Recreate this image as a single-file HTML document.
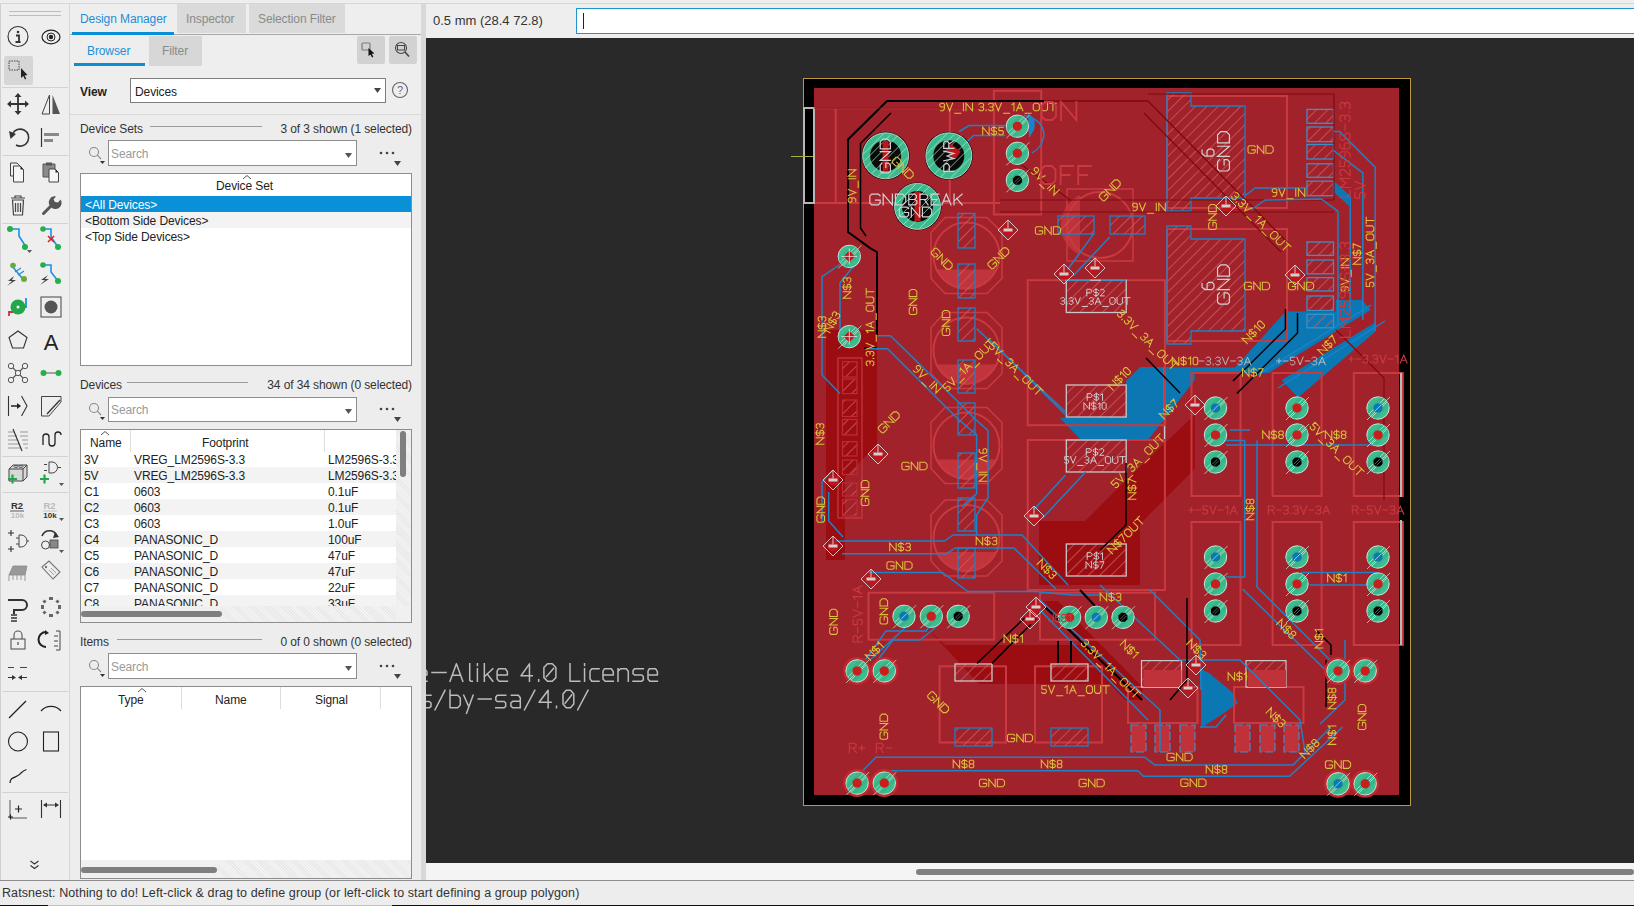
<!DOCTYPE html>
<html><head><meta charset="utf-8">
<style>
*{margin:0;padding:0;box-sizing:border-box}
html,body{width:1634px;height:906px;overflow:hidden;background:#eeeeee;font-family:"Liberation Sans",sans-serif;font-size:12px;color:#333}
.a{position:absolute}
.sep{position:absolute;height:1px;background:#cfcfcf}
.t{position:absolute;white-space:nowrap;line-height:16px}
.box{position:absolute;background:#fff;border:1px solid #8a8a8a}
.row{position:absolute;left:1px;right:1px;height:16px}
.row span{position:absolute;top:1px;white-space:nowrap}
.hdr{position:absolute;top:0;height:22px;border-right:1px solid #dcdcdc}
</style></head><body>
<!-- top strip -->
<div class="a" style="left:0;top:0;width:1634px;height:3px;background:#eeeeee"></div>
<div class="a" style="left:0;top:3px;width:1634px;height:1px;background:#d6d6d6"></div>
<!-- left toolbar -->
<div class="a" style="left:0;top:4px;width:1px;height:876px;background:#d0d0d0"></div>
<div class="a" style="left:69px;top:4px;width:1px;height:876px;background:#d6d6d6"></div>
<svg class="a" style="left:0;top:0" width="70" height="880" font-family="Liberation Sans">
 <!-- grip -->
 <path d="M9 11.5 H61 M9 15.5 H61" stroke="#bdbdbd" stroke-width="1"/>
 <!-- separators -->
 <g stroke="#d2d2d2" stroke-width="1"><path d="M2 87.5H68M2 155.5H68M2 223.5H68M2 456.5H68M2 492.5H68M2 691.5H68M2 792.5H68"/></g>
 <!-- row1 info / eye -->
 <circle cx="18" cy="36.5" r="10" fill="none" stroke="#333" stroke-width="1.1"/>
 <circle cx="18" cy="32" r="1.3" fill="#333"/><path d="M16 35.5H19V41.5M15.5 42H20.5" stroke="#333" stroke-width="1.8" fill="none"/>
 <ellipse cx="51" cy="37" rx="9" ry="6.8" fill="none" stroke="#222" stroke-width="1.2"/>
 <circle cx="51" cy="37" r="4" fill="none" stroke="#222" stroke-width="1"/><circle cx="51" cy="37" r="2.2" fill="#222"/>
 <!-- row2 select -->
 <rect x="4" y="56" width="29" height="29" rx="2" fill="#d6d6d6"/>
 <rect x="9" y="61" width="10" height="9" fill="none" stroke="#444" stroke-width="1" stroke-dasharray="1.5 1"/>
 <path d="M21 68 L21 78 L23.3 76 L25 79.5 L26.3 78.8 L24.6 75.4 L27.5 75 Z" fill="#222"/>
 <!-- row3 move / mirror -->
 <path d="M18 95V113M9 104H27" stroke="#333" stroke-width="1.8"/>
 <path d="M18 93l-3.5 4h7zM18 115l-3.5-4h7zM7 104l4-3.5v7zM29 104l-4-3.5v7z" fill="#333"/>
 <path d="M49.5 95 L42 114 H49.5 Z" fill="none" stroke="#444" stroke-width="1"/>
 <path d="M52.5 95 L60 114 H52.5 Z" fill="#555"/>
 <!-- row4 rotate / align -->
 <path d="M12.5 134 A8.5 8.5 0 1 1 16 145" fill="none" stroke="#333" stroke-width="1.6"/>
 <path d="M9 131 L16 134 L10.5 139 Z" fill="#333"/>
 <path d="M41.5 128V147" stroke="#333" stroke-width="1.2"/>
 <rect x="44" y="133" width="15" height="3" fill="#888"/><rect x="44" y="139" width="9" height="3" fill="#888"/>
 <!-- row5 copy / paste -->
 <path d="M10.5 163H17l3 3v10h-9.5z" fill="#f0f0f0" stroke="#444" stroke-width="1"/>
 <path d="M13.5 166H20l3.5 3.5V182h-10z" fill="#f6f6f6" stroke="#444" stroke-width="1"/>
 <path d="M20.5 166L23.5 169.5H20.5z" fill="#222"/>
 <path d="M43 164H55V177H43z" fill="#8a8a8a" stroke="#555" stroke-width="1"/>
 <rect x="46" y="162.5" width="6" height="3" fill="#555"/>
 <path d="M49 169H55l3.5 3.5V182H49z" fill="#f6f6f6" stroke="#444" stroke-width="1"/>
 <path d="M55.5 169L58.5 172.5H55.5z" fill="#222"/>
 <!-- row6 trash / wrench -->
 <path d="M11 198H25M15 198V196H21V198" fill="none" stroke="#444" stroke-width="1.2"/>
 <path d="M12.5 200H23.5L22.5 215H13.5Z" fill="none" stroke="#444" stroke-width="1.2"/>
 <path d="M15.5 203V212M18 203V212M20.5 203V212" stroke="#444" stroke-width="1.2"/>
 <path d="M43.5 213.5 L52 205" stroke="#555" stroke-width="3" stroke-linecap="round"/>
 <path d="M50.5 206.5 A6 6 0 0 1 56 196.5 L53.5 199.5 L55 202 L58 202.5 L60.5 199.5 A6 6 0 0 1 50.5 206.5Z" fill="#555"/>
 <!-- row7 route / ripup -->
 <path d="M10 229H19V236L26 247" fill="none" stroke="#1f8fe0" stroke-width="1.6"/>
 <circle cx="10" cy="229" r="3" fill="#22b04a"/><circle cx="25" cy="247" r="3" fill="#22b04a"/>
 <path d="M27 250h5l-2.5 3z" fill="#555"/>
 <path d="M43 229H51V237L58 247" fill="none" stroke="#1f8fe0" stroke-width="1.6"/>
 <circle cx="43" cy="229" r="2.8" fill="#22b04a"/><circle cx="58" cy="247" r="3" fill="#22b04a"/>
 <path d="M48 236L54 242M54 236L48 242" stroke="#e02020" stroke-width="1.6"/>
 <!-- row8 -->
 <path d="M12 266L22 278" stroke="#1f8fe0" stroke-width="1.5"/>
 <circle cx="13" cy="265.5" r="2.8" fill="#6aa83a"/><circle cx="24" cy="279" r="3" fill="#6aa83a"/>
 <path d="M15 272L21 268M18 275L24 271" stroke="#1f8fe0" stroke-width="1.2"/>
 <path d="M14 276L8 281H12L7 286L16 280H12Z" fill="#444"/>
 <path d="M43 265H51V272L58 281" fill="none" stroke="#1f8fe0" stroke-width="1.6"/>
 <circle cx="43" cy="265" r="2.8" fill="#22b04a"/><circle cx="58" cy="281" r="3" fill="#22b04a"/>
 <path d="M48 275L41 280H45L40 285L49 279H45Z" fill="#444"/>
 <!-- row9 via / hole -->
 <path d="M9 316V312H13" fill="none" stroke="#d03040" stroke-width="1.8"/>
 <path d="M26 298V307H23" fill="none" stroke="#1f8fe0" stroke-width="1.8"/>
 <circle cx="18" cy="307" r="7.5" fill="#21a84a"/><circle cx="18" cy="307" r="1.5" fill="#fff"/>
 <rect x="41" y="297" width="20" height="20" fill="none" stroke="#444" stroke-width="1"/>
 <circle cx="51" cy="307" r="6.5" fill="#555"/>
 <!-- row10 polygon / text -->
 <path d="M18 331L27 337.5L23.5 348H12.5L9 337.5Z" fill="none" stroke="#333" stroke-width="1.1"/>
 <text x="51" y="349.5" font-size="22" text-anchor="middle" fill="#222">A</text>
 <!-- row11 -->
 <path d="M11 366L25 380M25 366L11 380" stroke="#555" stroke-width="1.1"/>
 <circle cx="18" cy="373" r="2.7" fill="#f0f0f0" stroke="#555"/>
 <circle cx="11" cy="366" r="2.7" fill="#f0f0f0" stroke="#555"/><circle cx="25" cy="366" r="2.7" fill="#f0f0f0" stroke="#555"/>
 <circle cx="11" cy="380" r="2.7" fill="#f0f0f0" stroke="#555"/><circle cx="25" cy="380" r="2.7" fill="#f0f0f0" stroke="#555"/>
 <path d="M44 373H58" stroke="#888" stroke-width="1.5"/>
 <circle cx="43.5" cy="373" r="3" fill="#22b04a"/><circle cx="58.5" cy="373" r="3" fill="#22b04a"/>
 <!-- row12 -->
 <path d="M8.5 396V416" stroke="#333" stroke-width="1.1"/>
 <path d="M11 406H20" stroke="#222" stroke-width="1.5"/><path d="M21 406L17 403V409Z" fill="#222"/>
 <path d="M21.5 396L27 406L21.5 416" fill="none" stroke="#333" stroke-width="1.1"/>
 <path d="M41.5 396.5H61V402L49 416H41.5Z" fill="none" stroke="#444" stroke-width="1"/>
 <path d="M47 414L60 400" stroke="#333" stroke-width="1.3"/>
 <!-- row13 -->
 <path d="M8 432H15M8 436H17M8 440H18M8 444H20M8 448H21M20 432H28M20 436H28M22 440H28M23 444H28M25 448H28" stroke="#999" stroke-width="1"/>
 <path d="M13 429L22 451" stroke="#333" stroke-width="1.2"/>
 <path d="M43 445V437A3 3 0 0 1 49 437V443A3 3 0 0 0 55 443V435A3 3 0 0 1 61 435" fill="none" stroke="#222" stroke-width="1.3"/>
 <!-- row14 add -->
 <path d="M9 469L13 465H27V477L23 481H9Z" fill="#d8d8d8" stroke="#444" stroke-width="1"/>
 <path d="M9 469H23V481M23 469L27 465" fill="none" stroke="#444" stroke-width="1"/>
 <ellipse cx="16" cy="466.5" rx="2" ry="1" fill="none" stroke="#444" stroke-width="0.8"/><ellipse cx="21" cy="466.5" rx="2" ry="1" fill="none" stroke="#444" stroke-width="0.8"/>
 <path d="M8 479H17M12.5 474.5V483.5" stroke="#21a84a" stroke-width="2.2"/>
 <path d="M52 462A5.5 5.5 0 0 1 52 473H49V462Z" fill="none" stroke="#444" stroke-width="1"/>
 <path d="M58 467.5H61M47 464.5H44M47 470.5H44" stroke="#444" stroke-width="1"/>
 <path d="M40 479H49M44.5 474.5V483.5" stroke="#21a84a" stroke-width="2.2"/>
 <path d="M59 483h5l-2.5 3z" fill="#555"/>
 <!-- row15 R2 -->
 <text x="17" y="509" font-size="9.5" font-weight="bold" text-anchor="middle" fill="#333">R2</text>
 <path d="M10 511H24" stroke="#333" stroke-width="0.8"/>
 <text x="17.5" y="518" font-size="8" font-weight="bold" text-anchor="middle" fill="#bbb">10k</text>
 <text x="49.5" y="509" font-size="9.5" font-weight="bold" text-anchor="middle" fill="#bbb">R2</text>
 <path d="M43 511H57" stroke="#bbb" stroke-width="0.8"/>
 <text x="50" y="518" font-size="8" font-weight="bold" text-anchor="middle" fill="#333">10k</text>
 <path d="M59 518h5l-2.5 3z" fill="#555"/>
 <!-- row16 -->
 <path d="M8 533H14M11 530V536M8 549H14M11 546V552" stroke="#333" stroke-width="1.1"/>
 <path d="M19 535H21A6 6 0 0 1 21 547H19Z" fill="none" stroke="#444" stroke-width="1"/>
 <path d="M27 541H29M16 538H19M16 544H19" stroke="#444" stroke-width="1"/>
 <path d="M42 536A8 8 0 0 1 57 536" fill="none" stroke="#333" stroke-width="1.6"/>
 <path d="M55 532L59 537L53 538Z" fill="#333"/>
 <circle cx="45.5" cy="545" r="4" fill="none" stroke="#444" stroke-width="1"/>
 <rect x="50" y="540" width="8" height="8" fill="#888" stroke="#444" stroke-width="0.8"/>
 <path d="M59 550h5l-2.5 3z" fill="#555"/>
 <!-- row17 -->
 <path d="M9 575L13 566H27L25 575Z" fill="#999" stroke="#888" stroke-width="0.8"/>
 <path d="M9 575V581M13 575V580M17 575V580M21 575V580M25 575V581" stroke="#999" stroke-width="1"/>
 <path d="M42 567L49 561L60 572L53 579Z" fill="none" stroke="#777" stroke-width="1.1"/>
 <circle cx="46" cy="567" r="1.2" fill="#777"/><path d="M49 570L54 575M51 568L56 573" stroke="#888" stroke-width="0.8"/>
 <!-- row18 -->
 <path d="M8 600H22A5 5 0 0 1 22 610H14V614" fill="none" stroke="#333" stroke-width="2"/>
 <path d="M11 615H17M11 618H17M11 621H17" stroke="#333" stroke-width="1.5"/>
 <g fill="#666"><rect x="49" y="597" width="4" height="3"/><rect x="49" y="614" width="4" height="3"/><rect x="41" y="605" width="3" height="4"/><rect x="58" y="605" width="3" height="4"/>
 <rect x="43" y="600" width="3" height="3" transform="rotate(45 44.5 601.5)"/><rect x="56" y="600" width="3" height="3" transform="rotate(45 57.5 601.5)"/>
 <rect x="43" y="611" width="3" height="3" transform="rotate(45 44.5 612.5)"/><rect x="56" y="611" width="3" height="3" transform="rotate(45 57.5 612.5)"/></g>
 <!-- row19 lock -->
 <path d="M14 639V635A4 4 0 0 1 22 635V639" fill="none" stroke="#555" stroke-width="1.1"/>
 <rect x="11" y="639" width="14" height="10" fill="none" stroke="#555" stroke-width="1.1"/>
 <path d="M18 642V645" stroke="#555" stroke-width="1.3"/>
 <path d="M46 632A6 6 0 0 0 46 647" fill="none" stroke="#222" stroke-width="2"/>
 <path d="M45 630L49 633L45 635Z" fill="#222"/>
 <path d="M56 631H60V650H56M54 636H58M54 641H58M54 646H58" fill="none" stroke="#444" stroke-width="1"/>
 <!-- row20 -->
 <path d="M8 667.5H14M20 667.5H27" stroke="#444" stroke-width="1.1"/>
 <path d="M8 677.5H14M20 677.5H27" stroke="#333" stroke-width="1.2"/>
 <path d="M16 677.5L12 675V680ZM18 677.5L22 675V680Z" fill="#333"/>
 <!-- row21 line / arc -->
 <path d="M9 718L26 701" stroke="#222" stroke-width="1.2"/>
 <path d="M41 711A13 13 0 0 1 61 711" fill="none" stroke="#222" stroke-width="1.2"/>
 <!-- row22 circle / rect -->
 <circle cx="18" cy="741.5" r="9.5" fill="none" stroke="#222" stroke-width="1.1"/>
 <rect x="43.5" y="732" width="15" height="19" fill="none" stroke="#222" stroke-width="1.1"/>
 <!-- row23 spline -->
 <path d="M10 783C10 776 18 778 21 773C23 771 25 770 26.5 769.5" fill="none" stroke="#222" stroke-width="1.3"/>
 <!-- row24 -->
 <path d="M10 800V818H27" stroke="#444" stroke-width="0.9" fill="none"/>
 <path d="M8 817H13M10.5 814.5V819.5M15 809H22M18.5 805.5V812.5" stroke="#222" stroke-width="1.2"/>
 <path d="M41.5 800V818M60.5 800V818M44 805H58" stroke="#333" stroke-width="1.1"/>
 <path d="M43 805L47 802.5V807.5ZM59 805L55 802.5V807.5Z" fill="#333"/>
 <!-- chevron -->
 <path d="M30.5 861L34.5 864L38.5 861M30.5 865.5L34.5 868.5L38.5 865.5" fill="none" stroke="#333" stroke-width="1.1"/>
</svg>

<!-- panel -->
<!-- PANEL -->
<div class="a" style="left:177px;top:4px;width:69px;height:29px;background:#dadada"></div>
<div class="a" style="left:249px;top:4px;width:96px;height:29px;background:#dadada"></div>
<div class="t" style="left:80px;top:11px;font-size:12px;letter-spacing:-0.1px;color:#1c8fd8">Design Manager</div>
<div class="t" style="left:186px;top:11px;font-size:12px;letter-spacing:-0.1px;color:#8a8a8a">Inspector</div>
<div class="t" style="left:258px;top:11px;font-size:12px;letter-spacing:-0.1px;color:#8a8a8a">Selection Filter</div>
<div class="a" style="left:70px;top:34px;width:352px;height:1px;background:#a8a8a8"></div>
<div class="a" style="left:72px;top:32px;width:102px;height:3px;background:#0a8fd6"></div>
<!-- sub tabs -->
<div class="a" style="left:149px;top:36px;width:53px;height:30px;background:#d7d7d7"></div>
<div class="t" style="left:87px;top:43px;font-size:12px;letter-spacing:-0.1px;color:#1c8fd8">Browser</div>
<div class="t" style="left:162px;top:43px;font-size:12px;letter-spacing:-0.1px;color:#8a8a8a">Filter</div>
<div class="a" style="left:74px;top:63px;width:71px;height:3px;background:#0a8fd6"></div>
<div class="a" style="left:357px;top:36px;width:28px;height:28px;background:#d2d2d2;border-radius:2px"></div>
<div class="a" style="left:389px;top:36px;width:28px;height:28px;background:#d2d2d2;border-radius:2px"></div>
<svg class="a" style="left:357px;top:36px" width="60" height="28">
 <rect x="5" y="7" width="8" height="7" rx="1" fill="none" stroke="#7a7a7a" stroke-width="1.2"/>
 <path d="M11.5 12 L11.5 20 L13.5 18.5 L15 21.5 L16.3 20.8 L14.8 17.8 L17.5 17.5 Z" fill="#111"/>
 <circle cx="44" cy="12" r="5.5" fill="none" stroke="#444" stroke-width="1.1"/>
 <rect x="40.5" y="9.5" width="7" height="4.5" fill="none" stroke="#444" stroke-width="1"/>
 <path d="M48 16 L52 20.5" stroke="#444" stroke-width="1.6"/>
</svg>
<!-- view row -->
<div class="t" style="left:80px;top:84px;font-size:12px;letter-spacing:-0.1px;font-weight:bold;color:#222">View</div>
<div class="box" style="left:130px;top:78px;width:256px;height:25px;border-color:#7d7d7d"></div>
<div class="t" style="left:135px;top:84px;font-size:12px;letter-spacing:-0.1px;color:#222">Devices</div>
<svg class="a" style="left:372px;top:86px" width="40" height="12"><path d="M2 2 L9 2 L5.5 7 Z" fill="#444"/></svg>
<svg class="a" style="left:390px;top:80px" width="20" height="20"><circle cx="10" cy="10" r="7.5" fill="none" stroke="#666" stroke-width="1.1"/><text x="10" y="14.2" font-size="11" text-anchor="middle" fill="#666" font-family="Liberation Sans">?</text></svg>
<div class="a" style="left:70px;top:114px;width:352px;height:1px;background:#d8d8d8"></div>
<div class="a" style="left:70px;top:115px;width:352px;height:765px;background:#ededed"></div>

<!-- SECTION helper: Device Sets -->
<div class="t" style="left:80px;top:121px;font-size:12px;letter-spacing:-0.1px;color:#333">Device Sets</div>
<div class="a" style="left:150px;top:126px;width:112px;height:1px;background:#9a9a9a"></div>
<div class="t" style="right:1222px;top:121px;font-size:12px;letter-spacing:-0.1px;color:#333">3 of 3 shown (1 selected)</div>
<div class="box" style="left:108px;top:140px;width:249px;height:26px;border-color:#8d8d8d"></div>
<div class="t" style="left:111px;top:146px;font-size:12px;letter-spacing:-0.1px;color:#9a9a9a">Search</div>

<div class="t" style="left:80px;top:377px;font-size:12px;letter-spacing:-0.1px;color:#333">Devices</div>
<div class="a" style="left:127px;top:382px;width:121px;height:1px;background:#9a9a9a"></div>
<div class="t" style="right:1222px;top:377px;font-size:12px;letter-spacing:-0.1px;color:#333">34 of 34 shown (0 selected)</div>
<div class="box" style="left:108px;top:397px;width:249px;height:25px;border-color:#8d8d8d"></div>
<div class="t" style="left:111px;top:402px;font-size:12px;letter-spacing:-0.1px;color:#9a9a9a">Search</div>

<div class="t" style="left:80px;top:634px;font-size:12px;letter-spacing:-0.1px;color:#333">Items</div>
<div class="a" style="left:117px;top:639px;width:145px;height:1px;background:#9a9a9a"></div>
<div class="t" style="right:1222px;top:634px;font-size:12px;letter-spacing:-0.1px;color:#333">0 of 0 shown (0 selected)</div>
<div class="box" style="left:108px;top:653px;width:249px;height:26px;border-color:#8d8d8d"></div>
<div class="t" style="left:111px;top:659px;font-size:12px;letter-spacing:-0.1px;color:#9a9a9a">Search</div>

<svg class="a" style="left:80px;top:130px" width="340" height="560">
 <g id="srch" fill="none" stroke="#888" stroke-width="1.1">
  <circle cx="14" cy="22" r="4.5"/><path d="M17.2 25.2 L21 29"/>
 </g>
 <path d="M20 31 L25 31 L22.5 34 Z" fill="#333"/>
 <path d="M265 23 L272 23 L268.5 28 Z" fill="#555"/>
 <circle cx="301" cy="23" r="1.3" fill="#444"/><circle cx="307" cy="23" r="1.3" fill="#444"/><circle cx="313" cy="23" r="1.3" fill="#444"/>
 <path d="M314 31 L321 31 L317.5 36 Z" fill="#444"/>
 <g transform="translate(0,256)">
  <use href="#srch"/>
  <path d="M20 31 L25 31 L22.5 34 Z" fill="#333"/>
  <path d="M265 23 L272 23 L268.5 28 Z" fill="#555"/>
  <circle cx="301" cy="23" r="1.3" fill="#444"/><circle cx="307" cy="23" r="1.3" fill="#444"/><circle cx="313" cy="23" r="1.3" fill="#444"/>
  <path d="M314 31 L321 31 L317.5 36 Z" fill="#444"/>
 </g>
 <g transform="translate(0,513)">
  <use href="#srch"/>
  <path d="M20 31 L25 31 L22.5 34 Z" fill="#333"/>
  <path d="M265 23 L272 23 L268.5 28 Z" fill="#555"/>
  <circle cx="301" cy="23" r="1.3" fill="#444"/><circle cx="307" cy="23" r="1.3" fill="#444"/><circle cx="313" cy="23" r="1.3" fill="#444"/>
  <path d="M314 31 L321 31 L317.5 36 Z" fill="#444"/>
 </g>
</svg>

<!-- device set list -->
<div class="box" style="left:80px;top:173px;width:332px;height:193px;border-color:#8d8d8d;overflow:hidden">
 <svg class="a" style="left:160px;top:0" width="12" height="6"><path d="M2 5 L6 1.5 L10 5" fill="none" stroke="#555" stroke-width="1"/></svg>
 <div class="t" style="left:135px;top:4px;font-size:12px;letter-spacing:-0.1px;color:#222">Device Set</div>
 <div class="a" style="left:0;top:22px;width:330px;height:16px;background:#0a90d6"></div>
 <div class="t" style="left:4px;top:23px;font-size:12px;letter-spacing:-0.1px;color:#fff">&lt;All Devices&gt;</div>
 <div class="a" style="left:0;top:38px;width:330px;height:16px;background:#f3f3f3"></div>
 <div class="t" style="left:4px;top:39px;font-size:12px;letter-spacing:-0.1px;color:#222">&lt;Bottom Side Devices&gt;</div>
 <div class="t" style="left:4px;top:55px;font-size:12px;letter-spacing:-0.1px;color:#222">&lt;Top Side Devices&gt;</div>
</div>

<!-- devices table -->
<div class="box" style="left:80px;top:429px;width:332px;height:194px;border-color:#8d8d8d;overflow:hidden">
 <div class="a" style="left:49px;top:0;width:1px;height:22px;background:#dedede"></div>
 <div class="a" style="left:243px;top:0;width:1px;height:22px;background:#dedede"></div>
 <svg class="a" style="left:18px;top:0" width="12" height="6"><path d="M2 5 L6 1.5 L10 5" fill="none" stroke="#555" stroke-width="1"/></svg>
 <div class="t" style="left:9px;top:5px;font-size:12px;letter-spacing:-0.1px;color:#222">Name</div>
 <div class="t" style="left:121px;top:5px;font-size:12px;letter-spacing:-0.1px;color:#222">Footprint</div>
 <div class="t" style="left:3px;top:22px;font-size:12px;letter-spacing:-0.1px;color:#222">3V</div>
<div class="t" style="left:53px;top:22px;font-size:12px;letter-spacing:-0.1px;color:#222">VREG_LM2596S-3.3</div>
<div class="a" style="left:247px;top:21px;width:68px;height:16px;overflow:hidden"><div class="t" style="left:0;top:1px;font-size:12px;letter-spacing:-0.1px;color:#222">LM2596S-3.3</div></div>
<div class="a" style="left:0;top:37px;width:315px;height:16px;background:#f3f3f3"></div>
<div class="t" style="left:3px;top:38px;font-size:12px;letter-spacing:-0.1px;color:#222">5V</div>
<div class="t" style="left:53px;top:38px;font-size:12px;letter-spacing:-0.1px;color:#222">VREG_LM2596S-3.3</div>
<div class="a" style="left:247px;top:37px;width:68px;height:16px;overflow:hidden"><div class="t" style="left:0;top:1px;font-size:12px;letter-spacing:-0.1px;color:#222">LM2596S-3.3</div></div>
<div class="t" style="left:3px;top:54px;font-size:12px;letter-spacing:-0.1px;color:#222">C1</div>
<div class="t" style="left:53px;top:54px;font-size:12px;letter-spacing:-0.1px;color:#222">0603</div>
<div class="a" style="left:247px;top:53px;width:68px;height:16px;overflow:hidden"><div class="t" style="left:0;top:1px;font-size:12px;letter-spacing:-0.1px;color:#222">0.1uF</div></div>
<div class="a" style="left:0;top:69px;width:315px;height:16px;background:#f3f3f3"></div>
<div class="t" style="left:3px;top:70px;font-size:12px;letter-spacing:-0.1px;color:#222">C2</div>
<div class="t" style="left:53px;top:70px;font-size:12px;letter-spacing:-0.1px;color:#222">0603</div>
<div class="a" style="left:247px;top:69px;width:68px;height:16px;overflow:hidden"><div class="t" style="left:0;top:1px;font-size:12px;letter-spacing:-0.1px;color:#222">0.1uF</div></div>
<div class="t" style="left:3px;top:86px;font-size:12px;letter-spacing:-0.1px;color:#222">C3</div>
<div class="t" style="left:53px;top:86px;font-size:12px;letter-spacing:-0.1px;color:#222">0603</div>
<div class="a" style="left:247px;top:85px;width:68px;height:16px;overflow:hidden"><div class="t" style="left:0;top:1px;font-size:12px;letter-spacing:-0.1px;color:#222">1.0uF</div></div>
<div class="a" style="left:0;top:101px;width:315px;height:16px;background:#f3f3f3"></div>
<div class="t" style="left:3px;top:102px;font-size:12px;letter-spacing:-0.1px;color:#222">C4</div>
<div class="t" style="left:53px;top:102px;font-size:12px;letter-spacing:-0.1px;color:#222">PANASONIC_D</div>
<div class="a" style="left:247px;top:101px;width:68px;height:16px;overflow:hidden"><div class="t" style="left:0;top:1px;font-size:12px;letter-spacing:-0.1px;color:#222">100uF</div></div>
<div class="t" style="left:3px;top:118px;font-size:12px;letter-spacing:-0.1px;color:#222">C5</div>
<div class="t" style="left:53px;top:118px;font-size:12px;letter-spacing:-0.1px;color:#222">PANASONIC_D</div>
<div class="a" style="left:247px;top:117px;width:68px;height:16px;overflow:hidden"><div class="t" style="left:0;top:1px;font-size:12px;letter-spacing:-0.1px;color:#222">47uF</div></div>
<div class="a" style="left:0;top:133px;width:315px;height:16px;background:#f3f3f3"></div>
<div class="t" style="left:3px;top:134px;font-size:12px;letter-spacing:-0.1px;color:#222">C6</div>
<div class="t" style="left:53px;top:134px;font-size:12px;letter-spacing:-0.1px;color:#222">PANASONIC_D</div>
<div class="a" style="left:247px;top:133px;width:68px;height:16px;overflow:hidden"><div class="t" style="left:0;top:1px;font-size:12px;letter-spacing:-0.1px;color:#222">47uF</div></div>
<div class="t" style="left:3px;top:150px;font-size:12px;letter-spacing:-0.1px;color:#222">C7</div>
<div class="t" style="left:53px;top:150px;font-size:12px;letter-spacing:-0.1px;color:#222">PANASONIC_D</div>
<div class="a" style="left:247px;top:149px;width:68px;height:16px;overflow:hidden"><div class="t" style="left:0;top:1px;font-size:12px;letter-spacing:-0.1px;color:#222">22uF</div></div>
<div class="a" style="left:0;top:165px;width:315px;height:16px;background:#f3f3f3"></div>
<div class="t" style="left:3px;top:166px;font-size:12px;letter-spacing:-0.1px;color:#222">C8</div>
<div class="t" style="left:53px;top:166px;font-size:12px;letter-spacing:-0.1px;color:#222">PANASONIC_D</div>
<div class="a" style="left:247px;top:165px;width:68px;height:16px;overflow:hidden"><div class="t" style="left:0;top:1px;font-size:12px;letter-spacing:-0.1px;color:#222">33uF</div></div>
<div class="a" style="left:315px;top:0;width:15px;height:176px;background:repeating-linear-gradient(45deg,#f4f4f4 0 1px,#e8e8e8 1px 2px)"></div>
<div class="a" style="left:319px;top:1px;width:6px;height:46px;background:#7f7f7f;border-radius:3px"></div>
<div class="a" style="left:0;top:176px;width:330px;height:16px;background:#f0f0f0"></div>
<div class="a" style="left:141px;top:176px;width:174px;height:16px;background:repeating-linear-gradient(45deg,#f4f4f4 0 1px,#e8e8e8 1px 2px)"></div>
<div class="a" style="left:0;top:181px;width:141px;height:6px;background:#7f7f7f;border-radius:3px"></div>
</div>

<!-- items table -->
<div class="box" style="left:80px;top:686px;width:332px;height:193px;border-color:#8d8d8d;overflow:hidden">
 <div class="a" style="left:100px;top:0;width:1px;height:22px;background:#dedede"></div>
 <div class="a" style="left:199px;top:0;width:1px;height:22px;background:#dedede"></div>
 <div class="a" style="left:299px;top:0;width:1px;height:22px;background:#dedede"></div>
 <svg class="a" style="left:55px;top:0" width="12" height="6"><path d="M2 5 L6 1.5 L10 5" fill="none" stroke="#555" stroke-width="1"/></svg>
 <div class="t" style="left:37px;top:5px;font-size:12px;letter-spacing:-0.1px;color:#222">Type</div>
 <div class="t" style="left:134px;top:5px;font-size:12px;letter-spacing:-0.1px;color:#222">Name</div>
 <div class="t" style="left:234px;top:5px;font-size:12px;letter-spacing:-0.1px;color:#222">Signal</div>
 <div class="a" style="left:0;top:173px;width:330px;height:18px;background:#f0f0f0"></div>
 <div class="a" style="left:136px;top:173px;width:194px;height:18px;background:repeating-linear-gradient(45deg,#f4f4f4 0 1px,#e8e8e8 1px 2px)"></div>
 <div class="a" style="left:0;top:180px;width:136px;height:6px;background:#7f7f7f;border-radius:3px"></div>
</div>

<!-- canvas -->
<div class="a" style="left:421px;top:4px;width:5px;height:876px;background:#d8d8d8"></div>
<div class="a" style="left:426px;top:38px;width:1208px;height:825px;background:#292929;overflow:hidden" id="canvas"></div>
<svg class="a" style="left:426px;top:38px" width="1208" height="825" viewBox="426 38 1208 825" font-family="Liberation Sans">
<defs>
 <pattern id="hat" patternUnits="userSpaceOnUse" width="8" height="8" patternTransform="rotate(-45)"><path d="M0 0.5H8" stroke="#c85c60" stroke-width="0.8"/></pattern>
 <pattern id="hatb" patternUnits="userSpaceOnUse" width="8" height="8" patternTransform="rotate(-45)"><path d="M0 0.5H8" stroke="#d07070" stroke-width="0.8"/></pattern>
 <g id="pad"><circle r="11.2" fill="#3dbd90" stroke="#d8ece2" stroke-width="0.9"/><path d="M2 -11A11 11 0 0 1 11 -2L-2 11A11 11 0 0 1 -11 2Z" fill="#36b085" opacity="0.6"/><path d="M-11 12L12-11M-6 9L9-6M-9 6L6-9" stroke="#c8f0dc" stroke-width="0.7"/></g>
 <g id="hr"><path d="M-1.9-4.5H1.9L4.5-1.9V1.9L1.9 4.5H-1.9L-4.5 1.9V-1.9Z" fill="#c81e1e"/></g>
 <g id="hk"><path d="M-1.9-4.5H1.9L4.5-1.9V1.9L1.9 4.5H-1.9L-4.5 1.9V-1.9Z" fill="#000"/><path d="M-3 2L2-3M-1.5 3.5L3.5-1.5" stroke="#999" stroke-width="0.6"/></g>
 <g id="hb"><path d="M-1.9-4.5H1.9L4.5-1.9V1.9L1.9 4.5H-1.9L-4.5 1.9V-1.9Z" fill="#0b78b4"/><path d="M-3 3L3-3" stroke="#c8f0dc" stroke-width="0.7"/></g>
 <g id="via"><path d="M0 -10L10 0L0 10L-10 0Z" fill="none" stroke="#d8d8d8" stroke-width="0.9"/><circle r="5.5" fill="#c0141a"/><rect x="-4.5" y="-1.5" width="9" height="3" fill="#d0d0d0"/><path d="M0 -9V-1.5" stroke="#d8d8d8" stroke-width="0.9"/></g>
</defs>
<!-- license text -->
<path d="M416.50 675.04 H427.00 V671.64 L424.90 668.70 H418.07 L416.50 671.18 V679.00 L418.60 681.30 H427.00 M432.00 672.56 H446.00 M450.00 681.30 L456.40 663.82 L462.80 681.30 M452.30 675.32 H460.50 M469.72 663.82 V680.38 L471.01 681.30 H472.30 M477.40 668.70 V681.30 M477.40 663.82 V665.38 M484.34 663.82 V681.30 M484.34 676.70 L492.80 668.70 M487.16 673.94 L492.80 681.30 M497.10 675.04 H507.40 V671.64 L505.34 668.70 H498.65 L497.10 671.18 V679.00 L499.16 681.30 H507.40 M529.47 681.30 V663.82 L521.00 675.78 H532.30 M538.70 681.30 V679.83 M547.50 663.82 H552.30 L555.90 667.50 V677.62 L552.30 681.30 H547.50 L543.90 677.62 V667.50 ZM546.30 676.70 L553.50 668.42 M570.00 663.82 V681.30 H579.80 M584.55 668.70 V681.30 M584.55 663.82 V665.38 M599.00 668.70 H591.80 L590.00 671.18 V678.82 L591.80 681.30 H599.00 M603.00 675.04 H613.30 V671.64 L611.24 668.70 H604.54 L603.00 671.18 V679.00 L605.06 681.30 H613.30 M618.00 668.70 V681.30 M618.00 671.18 L620.58 668.70 H626.24 L628.30 671.18 V681.30 M643.30 668.70 H634.54 L633.00 670.72 V673.76 L634.54 675.04 H641.75 L643.30 676.52 V679.92 L641.75 681.30 H633.00 M648.00 675.04 H657.40 V671.64 L655.52 668.70 H649.41 L648.00 671.18 V679.00 L649.88 681.30 H657.40 M431.00 695.20 H421.65 L420.00 697.22 V700.26 L421.65 701.54 H429.35 L431.00 703.02 V706.42 L429.35 707.80 H420.00 M435.00 709.82 L445.00 690.32 M450.00 690.32 V707.80 H457.73 L460.30 705.04 V697.96 L457.73 695.20 H450.00 M463.70 695.20 L468.87 706.88 M473.10 695.20 L466.52 713.32 M478.30 699.06 H491.10 M505.70 695.20 H497.29 L495.80 697.22 V700.26 L497.29 701.54 H504.21 L505.70 703.02 V706.42 L504.21 707.80 H495.80 M511.37 695.20 H518.42 L520.30 697.68 V707.80 M520.30 701.36 H512.78 L510.90 702.92 V706.14 L512.78 707.80 H520.30 M524.50 709.82 L534.80 690.32 M548.10 707.80 V690.32 L539.10 702.28 H551.10 M556.50 707.80 V706.33 M566.24 690.32 H570.56 L573.80 694.00 V704.12 L570.56 707.80 H566.24 L563.00 704.12 V694.00 ZM565.16 703.20 L571.64 694.92 M577.70 709.82 L588.00 690.32 " fill="none" stroke="#bcbcbc" stroke-width="1.5" stroke-linejoin="round" stroke-linecap="square"/>
<!-- outline & board -->
<rect x="803.5" y="78.5" width="607" height="727" fill="#000" stroke="#b99b3c" stroke-width="1"/>
<rect x="814" y="88" width="585" height="707" fill="#a2222b"/>
<!--DARK-->
<polygon points="826,330 877,330 877,445 845,477 845,560 826,560" fill="#9c0d12"/>
<polygon points="1039,521 1085,521 1126,480 1194.7,414.7 1194.7,469 1140,524 1140,585 1039,585" fill="#9c0d12"/>
<polygon points="926,627 945,645 1085,645 1042,601 1058,601 1142.5,687 1142.5,700 1125,700 1110,684 979,684" fill="#9c0d12"/>
<!--/DARK-->
<!--BLUE-->
<polygon points="1140,367 1235,367.4 1285.5,311.5 1336,311.5 1336,300 1362,300 1375.5,315 1375.5,331.5 1298,397.5 1275,373 1194.7,373 1194.7,380.3 1148.8,439 1080,439 1060,418 1126,417 1126,381" fill="#0b78b4"/>
<polygon points="1201,669 1209,673 1232,692 1238,703 1221,715 1201,728" fill="#0b78b4"/>
<polygon points="1333.8,181 1349,194.8 1349,205.9 1333.8,192" fill="#0b78b4"/>
<polyline points="1268,381 1378,313" fill="none" stroke="#a3202a" stroke-width="13"/>
<polyline points="1258,374.5 1371,305" fill="none" stroke="#1a84c8" stroke-width="1.3"/>
<polyline points="1278,388 1385,321" fill="none" stroke="#1a84c8" stroke-width="1.3"/>
<path d="M1164.6 367V439" stroke="#c8c8c8" stroke-width="1.5"/>
<!--/BLUE-->
<!--SILK-->
<path d="M814 108.2H1000M814 203H1000M835.7 108V203M949.8 108V203" fill="none" stroke="#c93a40" stroke-width="2"/>
<rect x="804" y="108" width="10" height="95" fill="none" stroke="#b8b8b8" stroke-width="2"/>
<path d="M791 156.5H813" stroke="#a9ad3c" stroke-width="1"/>
<rect x="993.9" y="90.8" width="47.3" height="123.7" fill="none" stroke="#c93a40" stroke-width="2"/>
<rect x="1167" y="96" width="120" height="112" fill="none" stroke="#c93a40" stroke-width="2"/>
<rect x="1167" y="229" width="120" height="112" fill="none" stroke="#c93a40" stroke-width="2"/>
<path d="M945 217.5H987L1002 232.5V278.5L987 293.5H945L931 278.5V232.5Z" fill="none" stroke="#c93a40" stroke-width="1.5"/>
<circle cx="966.5" cy="255.5" r="33" fill="none" stroke="#c93a40" stroke-width="2"/>
<path d="M936 269.5A33 33 0 0 0 997 269.5Z" fill="#c93a40" opacity="0.8"/>
<path d="M945 312.5H987L1002 327.5V373.5L987 388.5H945L931 373.5V327.5Z" fill="none" stroke="#c93a40" stroke-width="1.5"/>
<circle cx="966.5" cy="350.5" r="33" fill="none" stroke="#c93a40" stroke-width="2"/>
<path d="M936 364.5A33 33 0 0 0 997 364.5Z" fill="#c93a40" opacity="0.8"/>
<path d="M945 407.5H987L1002 422.5V468.5L987 483.5H945L931 468.5V422.5Z" fill="none" stroke="#c93a40" stroke-width="1.5"/>
<circle cx="966.5" cy="445.5" r="33" fill="none" stroke="#c93a40" stroke-width="2"/>
<path d="M936 459.5A33 33 0 0 0 997 459.5Z" fill="#c93a40" opacity="0.8"/>
<path d="M945 500H987L1002 515V561L987 576H945L931 561V515Z" fill="none" stroke="#c93a40" stroke-width="1.5"/>
<circle cx="966.5" cy="538" r="33" fill="none" stroke="#c93a40" stroke-width="2"/>
<path d="M936 552A33 33 0 0 0 997 552Z" fill="#c93a40" opacity="0.8"/>
<circle cx="1100" cy="225" r="33" fill="none" stroke="#c93a40" stroke-width="2"/>
<path d="M1067 189H1133V261H1067Z" fill="none" stroke="#c93a40" stroke-width="1.5"/>
<path d="M1080 195A33 33 0 0 0 1080 255Z" fill="#c93a40" opacity="0.7"/>
<rect x="1027.7" y="280.2" width="137.2" height="145" fill="none" stroke="#c93a40" stroke-width="2"/>
<rect x="1027.7" y="440" width="137.2" height="150" fill="none" stroke="#c93a40" stroke-width="2"/>
<rect x="1191.5" y="373" width="49" height="123" fill="none" stroke="#c93a40" stroke-width="2"/>
<rect x="1191.5" y="522" width="49" height="123" fill="none" stroke="#c93a40" stroke-width="2"/>
<rect x="1272.6" y="373" width="49" height="123" fill="none" stroke="#c93a40" stroke-width="2"/>
<rect x="1272.6" y="522" width="49" height="123" fill="none" stroke="#c93a40" stroke-width="2"/>
<rect x="1353.8" y="373" width="49" height="123" fill="none" stroke="#c93a40" stroke-width="2"/>
<rect x="1353.8" y="522" width="49" height="123" fill="none" stroke="#c93a40" stroke-width="2"/>
<path d="M1401 373V497M1401 520V645" stroke="#b8b8b8" stroke-width="2"/>
<rect x="868.5" y="592.7" width="125.7" height="47" fill="none" stroke="#c93a40" stroke-width="2"/>
<rect x="1040" y="592.7" width="115" height="47" fill="none" stroke="#c93a40" stroke-width="2"/>
<rect x="939.6" y="666.3" width="66.4" height="76.2" fill="none" stroke="#c93a40" stroke-width="2"/>
<rect x="1035" y="666.3" width="67" height="76.2" fill="none" stroke="#c93a40" stroke-width="2"/>
<rect x="1128" y="687" width="69.5" height="36" fill="none" stroke="#c93a40" stroke-width="2"/><rect x="1234" y="687" width="69.5" height="36" fill="none" stroke="#c93a40" stroke-width="2"/>
<rect x="838" y="358" width="24" height="160" fill="none" stroke="#c93a40" stroke-width="1.2"/>
<!--/SILK-->
<!--SMD-->
<path d="M1167 93H1191V106H1245V198H1191V211H1167Z" fill="url(#hat)" stroke="#1a82c6" stroke-width="1.3"/>
<path d="M1167 226H1191V239H1245V331H1191V344H1167Z" fill="url(#hat)" stroke="#1a82c6" stroke-width="1.3"/>
<rect x="1307" y="109.4" width="26.5" height="13.899999999999991" fill="url(#hat)" stroke="#3a90c8" stroke-width="1.3"/>
<rect x="1307" y="127" width="26.5" height="14.599999999999994" fill="url(#hat)" stroke="#3a90c8" stroke-width="1.3"/>
<rect x="1307" y="144.5" width="26.5" height="14.5" fill="url(#hat)" stroke="#3a90c8" stroke-width="1.3"/>
<rect x="1307" y="163.8" width="26.5" height="13.5" fill="url(#hat)" stroke="#3a90c8" stroke-width="1.3"/>
<rect x="1307" y="181.2" width="26.5" height="14.5" fill="url(#hat)" stroke="#3a90c8" stroke-width="1.3"/>
<rect x="1307" y="242" width="26.5" height="13.400000000000006" fill="url(#hat)" stroke="#3a90c8" stroke-width="1.3"/>
<rect x="1307" y="260" width="26.5" height="13.800000000000011" fill="url(#hat)" stroke="#3a90c8" stroke-width="1.3"/>
<rect x="1307" y="277.6" width="26.5" height="13.399999999999977" fill="url(#hat)" stroke="#3a90c8" stroke-width="1.3"/>
<rect x="1307" y="296" width="26.5" height="14.5" fill="url(#hat)" stroke="#3a90c8" stroke-width="1.3"/>
<rect x="1307" y="314.3" width="26.5" height="13.5" fill="url(#hat)" stroke="#3a90c8" stroke-width="1.3"/>
<rect x="1066.3" y="280.2" width="59.90000000000009" height="32.30000000000001" fill="url(#hat)" stroke="#c8c8c8" stroke-width="1.3"/>
<rect x="1066.3" y="385" width="59.90000000000009" height="32" fill="url(#hat)" stroke="#c8c8c8" stroke-width="1.3"/>
<rect x="1066.3" y="440" width="59.90000000000009" height="32" fill="url(#hat)" stroke="#c8c8c8" stroke-width="1.3"/>
<rect x="1066.3" y="544" width="59.90000000000009" height="32" fill="url(#hat)" stroke="#c8c8c8" stroke-width="1.3"/>
<rect x="958" y="213.5" width="17" height="34.5" fill="url(#hat)" stroke="#1a84c8" stroke-width="1.3"/>
<rect x="958" y="264" width="17" height="34" fill="url(#hat)" stroke="#1a84c8" stroke-width="1.3"/>
<rect x="958" y="308" width="17" height="33" fill="url(#hat)" stroke="#1a84c8" stroke-width="1.3"/>
<rect x="958" y="360" width="17" height="33" fill="url(#hat)" stroke="#1a84c8" stroke-width="1.3"/>
<rect x="958" y="403" width="17" height="32" fill="url(#hat)" stroke="#1a84c8" stroke-width="1.3"/>
<rect x="958" y="453" width="17" height="35" fill="url(#hat)" stroke="#1a84c8" stroke-width="1.3"/>
<rect x="958" y="498" width="17" height="33" fill="url(#hat)" stroke="#1a84c8" stroke-width="1.3"/>
<rect x="958" y="548" width="17" height="30" fill="url(#hat)" stroke="#1a84c8" stroke-width="1.3"/>
<rect x="842.5" y="361.7" width="14.5" height="15.300000000000011" fill="url(#hat)" stroke="#c02a30" stroke-width="1.2"/>
<rect x="842.5" y="379" width="14.5" height="14.600000000000023" fill="url(#hat)" stroke="#c02a30" stroke-width="1.2"/>
<rect x="842.5" y="400" width="14.5" height="16.600000000000023" fill="url(#hat)" stroke="#c02a30" stroke-width="1.2"/>
<rect x="842.5" y="419.5" width="14.5" height="15.5" fill="url(#hat)" stroke="#c02a30" stroke-width="1.2"/>
<rect x="842.5" y="441.7" width="14.5" height="14.300000000000011" fill="url(#hat)" stroke="#c02a30" stroke-width="1.2"/>
<rect x="842.5" y="460" width="14.5" height="14.600000000000023" fill="url(#hat)" stroke="#c02a30" stroke-width="1.2"/>
<rect x="842.5" y="483" width="14.5" height="13" fill="url(#hat)" stroke="#c02a30" stroke-width="1.2"/>
<rect x="842.5" y="499.7" width="14.5" height="16.30000000000001" fill="url(#hat)" stroke="#c02a30" stroke-width="1.2"/>
<rect x="955" y="664" width="37" height="17" fill="url(#hat)" stroke="#c8c8c8" stroke-width="1.3"/>
<rect x="955" y="728" width="37" height="18" fill="url(#hat)" stroke="#1a82c6" stroke-width="1.3"/>
<rect x="1051" y="664" width="37" height="17" fill="url(#hat)" stroke="#c8c8c8" stroke-width="1.3"/>
<rect x="1051" y="728" width="37" height="18" fill="url(#hat)" stroke="#1a82c6" stroke-width="1.3"/>
<rect x="1141.5" y="660.6" width="40" height="26.6" fill="url(#hat)" stroke="#c8c8c8" stroke-width="1.2"/>
<rect x="1143.5" y="670" width="38" height="17" fill="#c0323a"/>
<rect x="1246" y="660.6" width="40" height="26.6" fill="url(#hat)" stroke="#c8c8c8" stroke-width="1.2"/>
<rect x="1248" y="670" width="38" height="17" fill="#c0323a"/>
<rect x="1131" y="725" width="15" height="27" fill="#c0323a" stroke="#3a90c8" stroke-width="1.2" stroke-dasharray="8 3"/>
<rect x="1155" y="725" width="15" height="27" fill="#c0323a" stroke="#3a90c8" stroke-width="1.2" stroke-dasharray="8 3"/>
<rect x="1180" y="725" width="15" height="27" fill="#c0323a" stroke="#3a90c8" stroke-width="1.2" stroke-dasharray="8 3"/>
<rect x="1235" y="725" width="15" height="27" fill="#c0323a" stroke="#3a90c8" stroke-width="1.2" stroke-dasharray="8 3"/>
<rect x="1260" y="725" width="15" height="27" fill="#c0323a" stroke="#3a90c8" stroke-width="1.2" stroke-dasharray="8 3"/>
<rect x="1284" y="725" width="15" height="27" fill="#c0323a" stroke="#3a90c8" stroke-width="1.2" stroke-dasharray="8 3"/>
<!--/SMD-->
<!--TRACES-->
<polyline points="1044,101 887,101 848,139.5 848,232 870.5,248.4 877,252 877,335" fill="none" stroke="#000" stroke-width="2" stroke-linejoin="round"/>
<polyline points="891,113 860.5,143.5 860.5,228 866,236" fill="none" stroke="#000" stroke-width="1.5" stroke-linejoin="round"/>
<polyline points="877,348 864,348" fill="none" stroke="#000" stroke-width="1.5" stroke-linejoin="round"/>
<polyline points="1044,101 1148,101 1289,244" fill="none" stroke="#7e0a0e" stroke-width="1.5" stroke-linejoin="round"/>
<polyline points="1144,113 1281,252" fill="none" stroke="#7e0a0e" stroke-width="1.2" stroke-linejoin="round"/>
<polyline points="1000,200 1334,200" fill="none" stroke="#7e0a0e" stroke-width="1.2" stroke-linejoin="round"/>
<polyline points="1000,212 1334,212" fill="none" stroke="#7e0a0e" stroke-width="1.2" stroke-linejoin="round"/>
<polyline points="814,108 1000,108" fill="none" stroke="#7e0a0e" stroke-width="1.0" stroke-linejoin="round"/>
<polyline points="1148,94 1334,94 1334,200" fill="none" stroke="#7e0a0e" stroke-width="1.2" stroke-linejoin="round"/>
<polyline points="840,264.5 822,276.6 822,375 840,393.5" fill="none" stroke="#1a84c8" stroke-width="1.5" stroke-linejoin="round"/>
<polyline points="856.5,262.5 840,282.7 840,333" fill="none" stroke="#1a84c8" stroke-width="1.5" stroke-linejoin="round"/>
<polyline points="877.5,335.8 890.5,335.8 959.3,403 975,419 988,430.5 988,498 976.6,515 976.6,535" fill="none" stroke="#1a84c8" stroke-width="1.5" stroke-linejoin="round"/>
<polyline points="867.5,348.7 887.6,348.7 950.7,411.8 957.9,419 976.6,434.8 976.6,493.6 962,506.6" fill="none" stroke="#1a84c8" stroke-width="1.5" stroke-linejoin="round"/>
<polyline points="976.6,328.6 1065.5,411.8" fill="none" stroke="#1a84c8" stroke-width="1.5" stroke-linejoin="round"/>
<polyline points="990,340 1066,415" fill="none" stroke="#1a84c8" stroke-width="1.5" stroke-linejoin="round"/>
<polyline points="959.3,131.5 969.4,125.4 1005.6,125.4" fill="none" stroke="#1a84c8" stroke-width="1.5" stroke-linejoin="round"/>
<polyline points="965.3,143.5 973.4,135.5 1005.6,135.5" fill="none" stroke="#1a84c8" stroke-width="1.5" stroke-linejoin="round"/>
<path d="M1023.8 115.3 Q1044 120 1044 135.5 Q1042 148 1031.8 153" fill="none" stroke="#1a84c8" stroke-width="1.5"/>
<path d="M1028 114 Q1037 117 1034 130 L1029 138Z" fill="#1a84c8"/>
<polyline points="1094,233.4 1064.4,274" fill="none" stroke="#1a84c8" stroke-width="1.5" stroke-linejoin="round"/>
<polyline points="1109.8,237 1073,276" fill="none" stroke="#1a84c8" stroke-width="1.5" stroke-linejoin="round"/>
<polyline points="1066,280 1090,280" fill="none" stroke="#1a84c8" stroke-width="1.5" stroke-linejoin="round"/>
<polyline points="1101,280 1126,280" fill="none" stroke="#1a84c8" stroke-width="1.5" stroke-linejoin="round"/>
<polyline points="1015,160 1071,200.6" fill="none" stroke="#7e0a0e" stroke-width="1.2" stroke-linejoin="round"/>
<polyline points="1245,196 1255,188 1307.6,188" fill="none" stroke="#1a84c8" stroke-width="1.5" stroke-linejoin="round"/>
<polyline points="1251,210 1265,200 1321.4,199 1338,211.4 1338,325" fill="none" stroke="#1a84c8" stroke-width="1.5" stroke-linejoin="round"/>
<polyline points="1333.8,131.4 1339.3,131.4 1375.2,167.2 1375.2,331" fill="none" stroke="#1a84c8" stroke-width="1.5" stroke-linejoin="round"/>
<polyline points="1333.8,150.7 1362.8,172.8 1362.8,320" fill="none" stroke="#1a84c8" stroke-width="1.5" stroke-linejoin="round"/>
<polyline points="1347.6,194.8 1350.3,197.6 1350.3,312" fill="none" stroke="#1a84c8" stroke-width="1.5" stroke-linejoin="round"/>
<rect x="1058" y="216" width="36" height="18" fill="url(#hat)" stroke="#1a84c8" stroke-width="1.3"/>
<rect x="1110" y="216" width="35" height="18" fill="url(#hat)" stroke="#1a84c8" stroke-width="1.3"/>
<polyline points="1297.5,313 1297.5,333 1237,393.4" fill="none" stroke="#000" stroke-width="1.5" stroke-linejoin="round"/>
<polyline points="1285.4,309 1285.4,329 1233,381" fill="none" stroke="#000" stroke-width="1.5" stroke-linejoin="round"/>
<polyline points="1180,393 1146,358" fill="none" stroke="#000" stroke-width="1.5" stroke-linejoin="round"/>
<polyline points="1336,330 1384,378 1384,500" fill="none" stroke="#7e0a0e" stroke-width="1.2" stroke-linejoin="round"/>
<polyline points="835.7,541 944.7,541 953,535 1022,535 1068,585" fill="none" stroke="#1a84c8" stroke-width="1.5" stroke-linejoin="round"/>
<polyline points="842,553.7 946.8,553.7 955,548 1014,548 1056,589" fill="none" stroke="#1a84c8" stroke-width="1.5" stroke-linejoin="round"/>
<polyline points="869,572.6 942.6,572.6 967.8,591.5 1035,591.5 1072,595 1100,595" fill="none" stroke="#1a84c8" stroke-width="1.5" stroke-linejoin="round"/>
<polyline points="1065.5,475 1034,509.5" fill="none" stroke="#1a84c8" stroke-width="1.5" stroke-linejoin="round"/>
<polyline points="1085.6,472 1042.6,518" fill="none" stroke="#1a84c8" stroke-width="1.5" stroke-linejoin="round"/>
<polyline points="828.7,492 828.7,521 843,537" fill="none" stroke="#1a84c8" stroke-width="1.5" stroke-linejoin="round"/>
<polyline points="833,470 822,482 822,522" fill="none" stroke="#1a84c8" stroke-width="1.5" stroke-linejoin="round"/>
<polyline points="863,663 886,631 926,631 932,623" fill="none" stroke="#1a84c8" stroke-width="1.5" stroke-linejoin="round"/>
<polyline points="870,670 893,640 920,640 935,628" fill="none" stroke="#1a84c8" stroke-width="1.5" stroke-linejoin="round"/>
<polyline points="862.6,770.7 876,757.3 1145,757.3 1154.8,765 1293,765 1331,727" fill="none" stroke="#1a84c8" stroke-width="1.5" stroke-linejoin="round"/>
<polyline points="891,770.7 1137.7,770.7 1143.4,776.3 1289.5,776.3 1342.6,727" fill="none" stroke="#1a84c8" stroke-width="1.5" stroke-linejoin="round"/>
<polyline points="1226,577 1244.7,577 1244.7,440.5 1226,440.5" fill="none" stroke="#1a84c8" stroke-width="1.5" stroke-linejoin="round"/>
<polyline points="1257,440.5 1257,587 1318,648 1330,660" fill="none" stroke="#1a84c8" stroke-width="1.5" stroke-linejoin="round"/>
<polyline points="1242.6,589 1326.5,671" fill="none" stroke="#1a84c8" stroke-width="1.5" stroke-linejoin="round"/>
<polyline points="1301,572.6 1377,572.6" fill="none" stroke="#1a84c8" stroke-width="1.5" stroke-linejoin="round"/>
<polyline points="1309.7,585 1377,585" fill="none" stroke="#1a84c8" stroke-width="1.5" stroke-linejoin="round"/>
<polyline points="1226,445 1378,445" fill="none" stroke="#1a84c8" stroke-width="1.5" stroke-linejoin="round"/>
<polyline points="1230,430 1250,430" fill="none" stroke="#1a84c8" stroke-width="1.5" stroke-linejoin="round"/>
<polyline points="1150,590 1200,640 1201,690" fill="none" stroke="#1a84c8" stroke-width="1.5" stroke-linejoin="round"/>
<polyline points="1100,585 1180,660 1240,660 1300,720 1305,752" fill="none" stroke="#1a84c8" stroke-width="1.5" stroke-linejoin="round"/>
<polyline points="1320,724 1345,700 1345,640" fill="none" stroke="#1a84c8" stroke-width="1.5" stroke-linejoin="round"/>
<polyline points="1040,600 1160,710 1160,752" fill="none" stroke="#1a84c8" stroke-width="1.5" stroke-linejoin="round"/>
<polyline points="1040,610 1148,720" fill="none" stroke="#1a84c8" stroke-width="1.5" stroke-linejoin="round"/>
<polyline points="1226,715 1216,727 1200,727" fill="none" stroke="#1a84c8" stroke-width="1.5" stroke-linejoin="round"/>
<polyline points="905,628 870,660" fill="none" stroke="#1a84c8" stroke-width="1.5" stroke-linejoin="round"/>
<polyline points="1080,590 1095,606" fill="none" stroke="#000" stroke-width="2" stroke-linejoin="round"/>
<polyline points="977,663.4 1025,617.5" fill="none" stroke="#000" stroke-width="1.5" stroke-linejoin="round"/>
<polyline points="992,663.4 1036,619" fill="none" stroke="#000" stroke-width="1.5" stroke-linejoin="round"/>
<polyline points="1058,641 1058,663" fill="none" stroke="#000" stroke-width="2" stroke-linejoin="round"/>
<polyline points="1071,641 1071,663" fill="none" stroke="#000" stroke-width="2" stroke-linejoin="round"/>
<polyline points="1045,607 1142,700" fill="none" stroke="#000" stroke-width="2" stroke-linejoin="round"/>
<polyline points="1187,598 1187,680 1170,700" fill="none" stroke="#000" stroke-width="1.5" stroke-linejoin="round"/>
<polyline points="1326,660 1326,707" fill="none" stroke="#000" stroke-width="1.5" stroke-linejoin="round"/>
<polyline points="1316,630 1331,645 1331,655" fill="none" stroke="#000" stroke-width="1.5" stroke-linejoin="round"/>
<polyline points="1126,463 1126,525 1100,550" fill="none" stroke="#000" stroke-width="1.5" stroke-linejoin="round"/>
<use href="#via" transform="translate(1008,230)"/>
<use href="#via" transform="translate(1064,274)"/>
<use href="#via" transform="translate(1095,268)"/>
<use href="#via" transform="translate(1226,206)"/>
<use href="#via" transform="translate(1295,275)"/>
<use href="#via" transform="translate(878,454)"/>
<use href="#via" transform="translate(833,480)"/>
<use href="#via" transform="translate(833,546)"/>
<use href="#via" transform="translate(871,579)"/>
<use href="#via" transform="translate(1034,516)"/>
<use href="#via" transform="translate(1195,405)"/>
<use href="#via" transform="translate(1030,619)"/>
<use href="#via" transform="translate(1036,607)"/>
<use href="#via" transform="translate(1188,688)"/>
<use href="#via" transform="translate(1196,665)"/>
<!--/TRACES-->
<!--PADS-->
<g transform="translate(1017.4,126.2)"><use href="#pad"/><use href="#hr"/></g>
<g transform="translate(1017.4,153.3)"><use href="#pad"/><use href="#hr"/></g>
<g transform="translate(1017.4,180.3)"><use href="#pad"/><use href="#hk"/></g>
<g transform="translate(849.3,256.4)"><use href="#pad"/><rect x="-4" y="-4" width="8" height="8" fill="#c0141a" transform="rotate(45)"/><path d="M-8 0H8M0 -8V8" stroke="#e8e8e8" stroke-width="0.8"/></g>
<g transform="translate(849.3,336.6)"><use href="#pad"/><rect x="-4" y="-4" width="8" height="8" fill="#c0141a" transform="rotate(45)"/><path d="M-8 0H8M0 -8V8" stroke="#e8e8e8" stroke-width="0.8"/></g>
<g transform="translate(904,616.3)"><use href="#pad"/><use href="#hb"/></g>
<g transform="translate(931.3,616.3)"><use href="#pad"/><use href="#hr"/></g>
<g transform="translate(958.2,616.3)"><use href="#pad"/><use href="#hk"/></g>
<g transform="translate(1069.6,617.3)"><use href="#pad"/><use href="#hr"/></g>
<g transform="translate(1096.3,617.3)"><use href="#pad"/><use href="#hb"/></g>
<g transform="translate(1123,617.3)"><use href="#pad"/><use href="#hk"/></g>
<circle cx="857.1" cy="670.9" r="14" fill="#c02a30"/>
<g transform="translate(857.1,670.9)"><use href="#pad"/><use href="#hr"/></g>
<circle cx="884.3" cy="670.9" r="14" fill="#c02a30"/>
<g transform="translate(884.3,670.9)"><use href="#pad"/><use href="#hr"/></g>
<circle cx="857.1" cy="783.1" r="14" fill="#c02a30"/>
<g transform="translate(857.1,783.1)"><use href="#pad"/><use href="#hr"/></g>
<circle cx="884.3" cy="783.1" r="14" fill="#c02a30"/>
<g transform="translate(884.3,783.1)"><use href="#pad"/><use href="#hr"/></g>
<circle cx="1338" cy="670.9" r="14" fill="#c02a30"/>
<g transform="translate(1338,670.9)"><use href="#pad"/><use href="#hr"/></g>
<circle cx="1365.2" cy="670.9" r="14" fill="#c02a30"/>
<g transform="translate(1365.2,670.9)"><use href="#pad"/><use href="#hr"/></g>
<circle cx="1365.2" cy="783.8" r="14" fill="#c02a30"/>
<g transform="translate(1365.2,783.8)"><use href="#pad"/><use href="#hr"/></g>
<circle cx="1338" cy="783.8" r="14" fill="#c02a30"/>
<g transform="translate(1338,783.8)"><use href="#pad"/><use href="#hb"/></g>
<g transform="translate(1215.5,408)"><use href="#pad"/><use href="#hb"/></g>
<g transform="translate(1215.5,435)"><use href="#pad"/><use href="#hr"/></g>
<g transform="translate(1215.5,462)"><use href="#pad"/><use href="#hk"/></g>
<g transform="translate(1215.5,557)"><use href="#pad"/><use href="#hb"/></g>
<g transform="translate(1215.5,584)"><use href="#pad"/><use href="#hr"/></g>
<g transform="translate(1215.5,611)"><use href="#pad"/><use href="#hk"/></g>
<g transform="translate(1297,408)"><use href="#pad"/><use href="#hr"/></g>
<g transform="translate(1297,435)"><use href="#pad"/><use href="#hr"/></g>
<g transform="translate(1297,462)"><use href="#pad"/><use href="#hk"/></g>
<g transform="translate(1297,557)"><use href="#pad"/><use href="#hb"/></g>
<g transform="translate(1297,584)"><use href="#pad"/><use href="#hr"/></g>
<g transform="translate(1297,611)"><use href="#pad"/><use href="#hk"/></g>
<g transform="translate(1378,408)"><use href="#pad"/><use href="#hb"/></g>
<g transform="translate(1378,435)"><use href="#pad"/><use href="#hr"/></g>
<g transform="translate(1378,462)"><use href="#pad"/><use href="#hk"/></g>
<g transform="translate(1378,557)"><use href="#pad"/><use href="#hb"/></g>
<g transform="translate(1378,584)"><use href="#pad"/><use href="#hr"/></g>
<g transform="translate(1378,611)"><use href="#pad"/><use href="#hk"/></g>
<g transform="translate(885.6,155.8)"><circle r="24" fill="#000"/><circle r="23" fill="#3db98e" stroke="#d8ece2" stroke-width="0.8"/><circle r="15.5" fill="#0a0a0a"/><path d="M-20 12L12-20M-14 18L18-14M-8 21L21-8M-21 5L5-21M-22-2L-2-22M2 22L22 2" stroke="#b8ecd4" stroke-width="0.7"/><rect x="-3" y="-15" width="6" height="30" fill="#c0141a"/></g>
<g transform="translate(948.8,155.8)"><circle r="24" fill="#000"/><circle r="23" fill="#3db98e" stroke="#d8ece2" stroke-width="0.8"/><circle r="15.5" fill="#0a0a0a"/><path d="M-20 12L12-20M-14 18L18-14M-8 21L21-8M-21 5L5-21M-22-2L-2-22M2 22L22 2" stroke="#b8ecd4" stroke-width="0.7"/><path d="M2 -12L12 -4L6 4L-2 -4Z" fill="#c0141a"/></g>
<g transform="translate(917.5,206.4)"><circle r="24" fill="#000"/><circle r="23" fill="#3db98e" stroke="#d8ece2" stroke-width="0.8"/><circle r="15.5" fill="#0a0a0a"/><path d="M-20 12L12-20M-14 18L18-14M-8 21L21-8M-21 5L5-21M-22-2L-2-22M2 22L22 2" stroke="#b8ecd4" stroke-width="0.7"/><rect x="-3" y="-15" width="6" height="30" fill="#c0141a"/></g>
<!--/PADS-->
<!--TEXT-->
<path transform="translate(998,107) rotate(0) translate(0,3.80)" d="M-53.58 -3.80 H-57.00 L-58.14 -4.94 V-6.46 L-57.00 -7.60 H-54.72 L-53.58 -6.46 V-1.90 L-55.10 0.00 H-57.38 M-51.45 -7.60 L-48.41 0.00 L-45.37 -7.60 M-43.24 2.43 H-37.16 M-34.58 0.00 V-7.60 M-32.00 0.00 V-7.60 L-25.54 0.00 V-7.60 M-19.00 -6.46 L-17.86 -7.60 H-15.58 L-14.44 -6.46 V-4.71 L-15.58 -3.80 H-17.48 M-15.58 -3.80 L-14.44 -2.89 V-1.14 L-15.58 0.00 H-17.86 L-19.00 -1.14 M-11.93 0.00 V-0.68 M-9.42 -6.46 L-8.28 -7.60 H-6.00 L-4.86 -6.46 V-4.71 L-6.00 -3.80 H-7.90 M-6.00 -3.80 L-4.86 -2.89 V-1.14 L-6.00 0.00 H-8.28 L-9.42 -1.14 M-2.74 -7.60 L0.30 0.00 L3.34 -7.60 M5.47 2.43 H11.55 M13.83 -5.93 L15.96 -7.60 V0.00 M18.47 0.00 L21.70 -7.60 L24.93 0.00 M19.61 -2.66 H23.79 M27.06 2.43 H33.14 M36.78 -7.60 H39.82 L41.34 -6.08 V-1.52 L39.82 0.00 H36.78 L35.26 -1.52 V-6.08 ZM43.47 -7.60 V-1.52 L44.99 0.00 H48.03 L49.55 -1.52 V-7.60 M51.68 -7.60 H58.14 M54.91 -7.60 V0.00 " fill="none" stroke="#d8c23c" stroke-width="1.05" stroke-linecap="square" stroke-linejoin="miter"/>
<path transform="translate(993,131) rotate(0) translate(0,3.80)" d="M-10.30 0.00 V-7.60 L-3.84 0.00 V-7.60 M3.61 -6.46 L2.47 -7.22 H-0.57 L-1.71 -6.08 V-4.71 L-0.57 -3.80 H2.47 L3.61 -2.89 V-1.14 L2.47 -0.38 H-0.57 L-1.71 -1.37 M0.95 -8.36 V0.76 M10.30 -7.60 H5.89 V-4.18 H9.16 L10.30 -3.04 V-1.14 L9.16 0.00 H6.88 L5.74 -1.14 " fill="none" stroke="#d8c23c" stroke-width="1.05" stroke-linecap="square" stroke-linejoin="miter"/>
<path transform="translate(852,186) rotate(-90) translate(0,3.80)" d="M-11.74 -3.80 H-15.16 L-16.30 -4.94 V-6.46 L-15.16 -7.60 H-12.88 L-11.74 -6.46 V-1.90 L-13.26 0.00 H-15.54 M-9.61 -7.60 L-6.57 0.00 L-3.53 -7.60 M-1.41 2.43 H4.67 M7.26 0.00 V-7.60 M9.84 0.00 V-7.60 L16.30 0.00 V-7.60 " fill="none" stroke="#d8c23c" stroke-width="1.05" stroke-linecap="square" stroke-linejoin="miter"/>
<path transform="translate(903,168) rotate(45) translate(0,3.80)" d="M-5.36 -6.46 L-6.65 -7.60 H-11.29 L-12.58 -6.31 V-1.29 L-11.29 0.00 H-6.65 L-5.36 -1.29 V-3.42 H-8.63 M-3.23 0.00 V-7.60 L3.23 0.00 V-7.60 M5.36 0.00 V-7.60 H10.53 L12.58 -5.55 V-2.05 L10.53 0.00 Z" fill="none" stroke="#d8c23c" stroke-width="1.05" stroke-linecap="square" stroke-linejoin="miter"/>
<path transform="translate(1045,181) rotate(45) translate(0,3.80)" d="M-11.74 -3.80 H-15.16 L-16.30 -4.94 V-6.46 L-15.16 -7.60 H-12.88 L-11.74 -6.46 V-1.90 L-13.26 0.00 H-15.54 M-9.61 -7.60 L-6.57 0.00 L-3.53 -7.60 M-1.41 2.43 H4.67 M7.26 0.00 V-7.60 M9.84 0.00 V-7.60 L16.30 0.00 V-7.60 " fill="none" stroke="#d8c23c" stroke-width="1.05" stroke-linecap="square" stroke-linejoin="miter"/>
<path transform="translate(1110,190) rotate(-45) translate(0,3.80)" d="M-5.36 -6.46 L-6.65 -7.60 H-11.29 L-12.58 -6.31 V-1.29 L-11.29 0.00 H-6.65 L-5.36 -1.29 V-3.42 H-8.63 M-3.23 0.00 V-7.60 L3.23 0.00 V-7.60 M5.36 0.00 V-7.60 H10.53 L12.58 -5.55 V-2.05 L10.53 0.00 Z" fill="none" stroke="#d8c23c" stroke-width="1.05" stroke-linecap="square" stroke-linejoin="miter"/>
<path transform="translate(1048,230.5) rotate(0) translate(0,3.80)" d="M-5.36 -6.46 L-6.65 -7.60 H-11.29 L-12.58 -6.31 V-1.29 L-11.29 0.00 H-6.65 L-5.36 -1.29 V-3.42 H-8.63 M-3.23 0.00 V-7.60 L3.23 0.00 V-7.60 M5.36 0.00 V-7.60 H10.53 L12.58 -5.55 V-2.05 L10.53 0.00 Z" fill="none" stroke="#d8c23c" stroke-width="1.05" stroke-linecap="square" stroke-linejoin="miter"/>
<path transform="translate(1149,207) rotate(0) translate(0,3.80)" d="M-11.74 -3.80 H-15.16 L-16.30 -4.94 V-6.46 L-15.16 -7.60 H-12.88 L-11.74 -6.46 V-1.90 L-13.26 0.00 H-15.54 M-9.61 -7.60 L-6.57 0.00 L-3.53 -7.60 M-1.41 2.43 H4.67 M7.26 0.00 V-7.60 M9.84 0.00 V-7.60 L16.30 0.00 V-7.60 " fill="none" stroke="#d8c23c" stroke-width="1.05" stroke-linecap="square" stroke-linejoin="miter"/>
<path transform="translate(1260.6,149.5) rotate(0) translate(0,3.80)" d="M-5.36 -6.46 L-6.65 -7.60 H-11.29 L-12.58 -6.31 V-1.29 L-11.29 0.00 H-6.65 L-5.36 -1.29 V-3.42 H-8.63 M-3.23 0.00 V-7.60 L3.23 0.00 V-7.60 M5.36 0.00 V-7.60 H10.53 L12.58 -5.55 V-2.05 L10.53 0.00 Z" fill="none" stroke="#d8c23c" stroke-width="1.05" stroke-linecap="square" stroke-linejoin="miter"/>
<path transform="translate(1288.5,192.5) rotate(0) translate(0,3.80)" d="M-11.74 -3.80 H-15.16 L-16.30 -4.94 V-6.46 L-15.16 -7.60 H-12.88 L-11.74 -6.46 V-1.90 L-13.26 0.00 H-15.54 M-9.61 -7.60 L-6.57 0.00 L-3.53 -7.60 M-1.41 2.43 H4.67 M7.26 0.00 V-7.60 M9.84 0.00 V-7.60 L16.30 0.00 V-7.60 " fill="none" stroke="#d8c23c" stroke-width="1.05" stroke-linecap="square" stroke-linejoin="miter"/>
<path transform="translate(1212.5,217) rotate(-90) translate(0,3.80)" d="M-5.36 -6.46 L-6.65 -7.60 H-11.29 L-12.58 -6.31 V-1.29 L-11.29 0.00 H-6.65 L-5.36 -1.29 V-3.42 H-8.63 M-3.23 0.00 V-7.60 L3.23 0.00 V-7.60 M5.36 0.00 V-7.60 H10.53 L12.58 -5.55 V-2.05 L10.53 0.00 Z" fill="none" stroke="#d8c23c" stroke-width="1.05" stroke-linecap="square" stroke-linejoin="miter"/>
<path transform="translate(1261,222) rotate(45) translate(0,3.80)" d="M-38.57 -6.46 L-37.43 -7.60 H-35.15 L-34.01 -6.46 V-4.71 L-35.15 -3.80 H-37.05 M-35.15 -3.80 L-34.01 -2.89 V-1.14 L-35.15 0.00 H-37.43 L-38.57 -1.14 M-31.50 0.00 V-0.68 M-28.99 -6.46 L-27.85 -7.60 H-25.57 L-24.43 -6.46 V-4.71 L-25.57 -3.80 H-27.47 M-25.57 -3.80 L-24.43 -2.89 V-1.14 L-25.57 0.00 H-27.85 L-28.99 -1.14 M-22.31 -7.60 L-19.27 0.00 L-16.23 -7.60 M-14.10 2.43 H-8.02 M-5.74 -5.93 L-3.61 -7.60 V0.00 M-1.10 0.00 L2.13 -7.60 L5.36 0.00 M0.04 -2.66 H4.22 M7.49 2.43 H13.57 M17.21 -7.60 H20.25 L21.77 -6.08 V-1.52 L20.25 0.00 H17.21 L15.69 -1.52 V-6.08 ZM23.90 -7.60 V-1.52 L25.42 0.00 H28.46 L29.98 -1.52 V-7.60 M32.11 -7.60 H38.57 M35.34 -7.60 V0.00 " fill="none" stroke="#d8c23c" stroke-width="1.05" stroke-linecap="square" stroke-linejoin="miter"/>
<path transform="translate(1257,286) rotate(0) translate(0,3.80)" d="M-5.36 -6.46 L-6.65 -7.60 H-11.29 L-12.58 -6.31 V-1.29 L-11.29 0.00 H-6.65 L-5.36 -1.29 V-3.42 H-8.63 M-3.23 0.00 V-7.60 L3.23 0.00 V-7.60 M5.36 0.00 V-7.60 H10.53 L12.58 -5.55 V-2.05 L10.53 0.00 Z" fill="none" stroke="#d8c23c" stroke-width="1.05" stroke-linecap="square" stroke-linejoin="miter"/>
<path transform="translate(1301,286) rotate(0) translate(0,3.80)" d="M-5.36 -6.46 L-6.65 -7.60 H-11.29 L-12.58 -6.31 V-1.29 L-11.29 0.00 H-6.65 L-5.36 -1.29 V-3.42 H-8.63 M-3.23 0.00 V-7.60 L3.23 0.00 V-7.60 M5.36 0.00 V-7.60 H10.53 L12.58 -5.55 V-2.05 L10.53 0.00 Z" fill="none" stroke="#d8c23c" stroke-width="1.05" stroke-linecap="square" stroke-linejoin="miter"/>
<path transform="translate(1345,275) rotate(-90) translate(0,3.80)" d="M-11.74 -3.80 H-15.16 L-16.30 -4.94 V-6.46 L-15.16 -7.60 H-12.88 L-11.74 -6.46 V-1.90 L-13.26 0.00 H-15.54 M-9.61 -7.60 L-6.57 0.00 L-3.53 -7.60 M-1.41 2.43 H4.67 M7.26 0.00 V-7.60 M9.84 0.00 V-7.60 L16.30 0.00 V-7.60 " fill="none" stroke="#d8c23c" stroke-width="1.05" stroke-linecap="square" stroke-linejoin="miter"/>
<path transform="translate(1357,254) rotate(-90) translate(0,3.80)" d="M-10.30 0.00 V-7.60 L-3.84 0.00 V-7.60 M3.61 -6.46 L2.47 -7.22 H-0.57 L-1.71 -6.08 V-4.71 L-0.57 -3.80 H2.47 L3.61 -2.89 V-1.14 L2.47 -0.38 H-0.57 L-1.71 -1.37 M0.95 -8.36 V0.76 M5.74 -7.60 H10.30 L6.88 0.00 " fill="none" stroke="#d8c23c" stroke-width="1.05" stroke-linecap="square" stroke-linejoin="miter"/>
<path transform="translate(1370,252) rotate(-90) translate(0,3.80)" d="M-30.17 -7.60 H-34.58 V-4.18 H-31.31 L-30.17 -3.04 V-1.14 L-31.31 0.00 H-33.59 L-34.73 -1.14 M-28.04 -7.60 L-25.00 0.00 L-21.96 -7.60 M-19.84 2.43 H-13.76 M-11.63 -6.46 L-10.49 -7.60 H-8.21 L-7.07 -6.46 V-4.71 L-8.21 -3.80 H-10.11 M-8.21 -3.80 L-7.07 -2.89 V-1.14 L-8.21 0.00 H-10.49 L-11.63 -1.14 M-4.94 0.00 L-1.71 -7.60 L1.52 0.00 M-3.80 -2.66 H0.38 M3.65 2.43 H9.73 M13.38 -7.60 H16.42 L17.94 -6.08 V-1.52 L16.42 0.00 H13.38 L11.86 -1.52 V-6.08 ZM20.06 -7.60 V-1.52 L21.58 0.00 H24.62 L26.14 -1.52 V-7.60 M28.27 -7.60 H34.73 M31.50 -7.60 V0.00 " fill="none" stroke="#d8c23c" stroke-width="1.05" stroke-linecap="square" stroke-linejoin="miter"/>
<path transform="translate(847,288) rotate(-90) translate(0,3.80)" d="M-10.30 0.00 V-7.60 L-3.84 0.00 V-7.60 M3.61 -6.46 L2.47 -7.22 H-0.57 L-1.71 -6.08 V-4.71 L-0.57 -3.80 H2.47 L3.61 -2.89 V-1.14 L2.47 -0.38 H-0.57 L-1.71 -1.37 M0.95 -8.36 V0.76 M5.74 -6.46 L6.88 -7.60 H9.16 L10.30 -6.46 V-4.71 L9.16 -3.80 H7.26 M9.16 -3.80 L10.30 -2.89 V-1.14 L9.16 0.00 H6.88 L5.74 -1.14 " fill="none" stroke="#d8c23c" stroke-width="1.05" stroke-linecap="square" stroke-linejoin="miter"/>
<path transform="translate(870,327) rotate(-90) translate(0,3.80)" d="M-38.57 -6.46 L-37.43 -7.60 H-35.15 L-34.01 -6.46 V-4.71 L-35.15 -3.80 H-37.05 M-35.15 -3.80 L-34.01 -2.89 V-1.14 L-35.15 0.00 H-37.43 L-38.57 -1.14 M-31.50 0.00 V-0.68 M-28.99 -6.46 L-27.85 -7.60 H-25.57 L-24.43 -6.46 V-4.71 L-25.57 -3.80 H-27.47 M-25.57 -3.80 L-24.43 -2.89 V-1.14 L-25.57 0.00 H-27.85 L-28.99 -1.14 M-22.31 -7.60 L-19.27 0.00 L-16.23 -7.60 M-14.10 2.43 H-8.02 M-5.74 -5.93 L-3.61 -7.60 V0.00 M-1.10 0.00 L2.13 -7.60 L5.36 0.00 M0.04 -2.66 H4.22 M7.49 2.43 H13.57 M17.21 -7.60 H20.25 L21.77 -6.08 V-1.52 L20.25 0.00 H17.21 L15.69 -1.52 V-6.08 ZM23.90 -7.60 V-1.52 L25.42 0.00 H28.46 L29.98 -1.52 V-7.60 M32.11 -7.60 H38.57 M35.34 -7.60 V0.00 " fill="none" stroke="#d8c23c" stroke-width="1.05" stroke-linecap="square" stroke-linejoin="miter"/>
<path transform="translate(913,302) rotate(-90) translate(0,3.80)" d="M-5.36 -6.46 L-6.65 -7.60 H-11.29 L-12.58 -6.31 V-1.29 L-11.29 0.00 H-6.65 L-5.36 -1.29 V-3.42 H-8.63 M-3.23 0.00 V-7.60 L3.23 0.00 V-7.60 M5.36 0.00 V-7.60 H10.53 L12.58 -5.55 V-2.05 L10.53 0.00 Z" fill="none" stroke="#d8c23c" stroke-width="1.05" stroke-linecap="square" stroke-linejoin="miter"/>
<path transform="translate(942,259) rotate(45) translate(0,3.80)" d="M-5.36 -6.46 L-6.65 -7.60 H-11.29 L-12.58 -6.31 V-1.29 L-11.29 0.00 H-6.65 L-5.36 -1.29 V-3.42 H-8.63 M-3.23 0.00 V-7.60 L3.23 0.00 V-7.60 M5.36 0.00 V-7.60 H10.53 L12.58 -5.55 V-2.05 L10.53 0.00 Z" fill="none" stroke="#d8c23c" stroke-width="1.05" stroke-linecap="square" stroke-linejoin="miter"/>
<path transform="translate(998.6,258) rotate(-45) translate(0,3.80)" d="M-5.36 -6.46 L-6.65 -7.60 H-11.29 L-12.58 -6.31 V-1.29 L-11.29 0.00 H-6.65 L-5.36 -1.29 V-3.42 H-8.63 M-3.23 0.00 V-7.60 L3.23 0.00 V-7.60 M5.36 0.00 V-7.60 H10.53 L12.58 -5.55 V-2.05 L10.53 0.00 Z" fill="none" stroke="#d8c23c" stroke-width="1.05" stroke-linecap="square" stroke-linejoin="miter"/>
<path transform="translate(946,323) rotate(-90) translate(0,3.80)" d="M-5.36 -6.46 L-6.65 -7.60 H-11.29 L-12.58 -6.31 V-1.29 L-11.29 0.00 H-6.65 L-5.36 -1.29 V-3.42 H-8.63 M-3.23 0.00 V-7.60 L3.23 0.00 V-7.60 M5.36 0.00 V-7.60 H10.53 L12.58 -5.55 V-2.05 L10.53 0.00 Z" fill="none" stroke="#d8c23c" stroke-width="1.05" stroke-linecap="square" stroke-linejoin="miter"/>
<path transform="translate(822,327) rotate(-90) translate(0,3.80)" d="M-10.30 0.00 V-7.60 L-3.84 0.00 V-7.60 M3.61 -6.46 L2.47 -7.22 H-0.57 L-1.71 -6.08 V-4.71 L-0.57 -3.80 H2.47 L3.61 -2.89 V-1.14 L2.47 -0.38 H-0.57 L-1.71 -1.37 M0.95 -8.36 V0.76 M5.74 -6.46 L6.88 -7.60 H9.16 L10.30 -6.46 V-4.71 L9.16 -3.80 H7.26 M9.16 -3.80 L10.30 -2.89 V-1.14 L9.16 0.00 H6.88 L5.74 -1.14 " fill="none" stroke="#d8c23c" stroke-width="1.05" stroke-linecap="square" stroke-linejoin="miter"/>
<path transform="translate(832,322) rotate(-60) translate(0,3.80)" d="M-10.30 0.00 V-7.60 L-3.84 0.00 V-7.60 M3.61 -6.46 L2.47 -7.22 H-0.57 L-1.71 -6.08 V-4.71 L-0.57 -3.80 H2.47 L3.61 -2.89 V-1.14 L2.47 -0.38 H-0.57 L-1.71 -1.37 M0.95 -8.36 V0.76 M5.74 -6.46 L6.88 -7.60 H9.16 L10.30 -6.46 V-4.71 L9.16 -3.80 H7.26 M9.16 -3.80 L10.30 -2.89 V-1.14 L9.16 0.00 H6.88 L5.74 -1.14 " fill="none" stroke="#d8c23c" stroke-width="1.05" stroke-linecap="square" stroke-linejoin="miter"/>
<path transform="translate(927,379) rotate(45) translate(0,3.80)" d="M-11.74 -3.80 H-15.16 L-16.30 -4.94 V-6.46 L-15.16 -7.60 H-12.88 L-11.74 -6.46 V-1.90 L-13.26 0.00 H-15.54 M-9.61 -7.60 L-6.57 0.00 L-3.53 -7.60 M-1.41 2.43 H4.67 M7.26 0.00 V-7.60 M9.84 0.00 V-7.60 L16.30 0.00 V-7.60 " fill="none" stroke="#d8c23c" stroke-width="1.05" stroke-linecap="square" stroke-linejoin="miter"/>
<path transform="translate(969,365) rotate(-45) translate(0,3.80)" d="M-29.22 -7.60 H-33.63 V-4.18 H-30.36 L-29.22 -3.04 V-1.14 L-30.36 0.00 H-32.64 L-33.78 -1.14 M-27.09 -7.60 L-24.05 0.00 L-21.01 -7.60 M-18.89 2.43 H-12.81 M-10.53 -5.93 L-8.40 -7.60 V0.00 M-5.89 0.00 L-2.66 -7.60 L0.57 0.00 M-4.75 -2.66 H-0.57 M2.70 2.43 H8.78 M12.43 -7.60 H15.47 L16.99 -6.08 V-1.52 L15.47 0.00 H12.43 L10.91 -1.52 V-6.08 ZM19.11 -7.60 V-1.52 L20.63 0.00 H23.67 L25.19 -1.52 V-7.60 M27.32 -7.60 H33.78 M30.55 -7.60 V0.00 " fill="none" stroke="#d8c23c" stroke-width="1.05" stroke-linecap="square" stroke-linejoin="miter"/>
<path transform="translate(1016,369) rotate(45) translate(0,3.80)" d="M-30.17 -7.60 H-34.58 V-4.18 H-31.31 L-30.17 -3.04 V-1.14 L-31.31 0.00 H-33.59 L-34.73 -1.14 M-28.04 -7.60 L-25.00 0.00 L-21.96 -7.60 M-19.84 2.43 H-13.76 M-11.63 -6.46 L-10.49 -7.60 H-8.21 L-7.07 -6.46 V-4.71 L-8.21 -3.80 H-10.11 M-8.21 -3.80 L-7.07 -2.89 V-1.14 L-8.21 0.00 H-10.49 L-11.63 -1.14 M-4.94 0.00 L-1.71 -7.60 L1.52 0.00 M-3.80 -2.66 H0.38 M3.65 2.43 H9.73 M13.38 -7.60 H16.42 L17.94 -6.08 V-1.52 L16.42 0.00 H13.38 L11.86 -1.52 V-6.08 ZM20.06 -7.60 V-1.52 L21.58 0.00 H24.62 L26.14 -1.52 V-7.60 M28.27 -7.60 H34.73 M31.50 -7.60 V0.00 " fill="none" stroke="#d8c23c" stroke-width="1.05" stroke-linecap="square" stroke-linejoin="miter"/>
<path transform="translate(1147.5,340) rotate(45) translate(0,3.80)" d="M-39.52 -6.46 L-38.38 -7.60 H-36.10 L-34.96 -6.46 V-4.71 L-36.10 -3.80 H-38.00 M-36.10 -3.80 L-34.96 -2.89 V-1.14 L-36.10 0.00 H-38.38 L-39.52 -1.14 M-32.45 0.00 V-0.68 M-29.94 -6.46 L-28.80 -7.60 H-26.52 L-25.38 -6.46 V-4.71 L-26.52 -3.80 H-28.42 M-26.52 -3.80 L-25.38 -2.89 V-1.14 L-26.52 0.00 H-28.80 L-29.94 -1.14 M-23.26 -7.60 L-20.22 0.00 L-17.18 -7.60 M-15.05 2.43 H-8.97 M-6.84 -6.46 L-5.70 -7.60 H-3.42 L-2.28 -6.46 V-4.71 L-3.42 -3.80 H-5.32 M-3.42 -3.80 L-2.28 -2.89 V-1.14 L-3.42 0.00 H-5.70 L-6.84 -1.14 M-0.15 0.00 L3.08 -7.60 L6.31 0.00 M0.99 -2.66 H5.17 M8.44 2.43 H14.52 M18.16 -7.60 H21.20 L22.72 -6.08 V-1.52 L21.20 0.00 H18.16 L16.64 -1.52 V-6.08 ZM24.85 -7.60 V-1.52 L26.37 0.00 H29.41 L30.93 -1.52 V-7.60 M33.06 -7.60 H39.52 M36.29 -7.60 V0.00 " fill="none" stroke="#d8c23c" stroke-width="1.05" stroke-linecap="square" stroke-linejoin="miter"/>
<path transform="translate(1185,361) rotate(0) translate(0,3.80)" d="M-12.69 0.00 V-7.60 L-6.23 0.00 V-7.60 M1.22 -6.46 L0.08 -7.22 H-2.96 L-4.10 -6.08 V-4.71 L-2.96 -3.80 H0.08 L1.22 -2.89 V-1.14 L0.08 -0.38 H-2.96 L-4.10 -1.37 M-1.44 -8.36 V0.76 M3.50 -5.93 L5.62 -7.60 V0.00 M9.27 -7.60 H11.55 L12.69 -6.46 V-1.14 L11.55 0.00 H9.27 L8.13 -1.14 V-6.46 Z" fill="none" stroke="#d8c23c" stroke-width="1.05" stroke-linecap="square" stroke-linejoin="miter"/>
<path transform="translate(1119.5,378.5) rotate(-45) translate(0,3.80)" d="M-12.69 0.00 V-7.60 L-6.23 0.00 V-7.60 M1.22 -6.46 L0.08 -7.22 H-2.96 L-4.10 -6.08 V-4.71 L-2.96 -3.80 H0.08 L1.22 -2.89 V-1.14 L0.08 -0.38 H-2.96 L-4.10 -1.37 M-1.44 -8.36 V0.76 M3.50 -5.93 L5.62 -7.60 V0.00 M9.27 -7.60 H11.55 L12.69 -6.46 V-1.14 L11.55 0.00 H9.27 L8.13 -1.14 V-6.46 Z" fill="none" stroke="#d8c23c" stroke-width="1.05" stroke-linecap="square" stroke-linejoin="miter"/>
<path transform="translate(1253.6,332) rotate(-45) translate(0,3.80)" d="M-12.69 0.00 V-7.60 L-6.23 0.00 V-7.60 M1.22 -6.46 L0.08 -7.22 H-2.96 L-4.10 -6.08 V-4.71 L-2.96 -3.80 H0.08 L1.22 -2.89 V-1.14 L0.08 -0.38 H-2.96 L-4.10 -1.37 M-1.44 -8.36 V0.76 M3.50 -5.93 L5.62 -7.60 V0.00 M9.27 -7.60 H11.55 L12.69 -6.46 V-1.14 L11.55 0.00 H9.27 L8.13 -1.14 V-6.46 Z" fill="none" stroke="#d8c23c" stroke-width="1.05" stroke-linecap="square" stroke-linejoin="miter"/>
<path transform="translate(1327.6,345) rotate(-45) translate(0,3.80)" d="M-10.30 0.00 V-7.60 L-3.84 0.00 V-7.60 M3.61 -6.46 L2.47 -7.22 H-0.57 L-1.71 -6.08 V-4.71 L-0.57 -3.80 H2.47 L3.61 -2.89 V-1.14 L2.47 -0.38 H-0.57 L-1.71 -1.37 M0.95 -8.36 V0.76 M5.74 -7.60 H10.30 L6.88 0.00 " fill="none" stroke="#d8c23c" stroke-width="1.05" stroke-linecap="square" stroke-linejoin="miter"/>
<path transform="translate(1252.8,372.5) rotate(0) translate(0,3.80)" d="M-10.30 0.00 V-7.60 L-3.84 0.00 V-7.60 M3.61 -6.46 L2.47 -7.22 H-0.57 L-1.71 -6.08 V-4.71 L-0.57 -3.80 H2.47 L3.61 -2.89 V-1.14 L2.47 -0.38 H-0.57 L-1.71 -1.37 M0.95 -8.36 V0.76 M5.74 -7.60 H10.30 L6.88 0.00 " fill="none" stroke="#d8c23c" stroke-width="1.05" stroke-linecap="square" stroke-linejoin="miter"/>
<path transform="translate(1169,409) rotate(-45) translate(0,3.80)" d="M-10.30 0.00 V-7.60 L-3.84 0.00 V-7.60 M3.61 -6.46 L2.47 -7.22 H-0.57 L-1.71 -6.08 V-4.71 L-0.57 -3.80 H2.47 L3.61 -2.89 V-1.14 L2.47 -0.38 H-0.57 L-1.71 -1.37 M0.95 -8.36 V0.76 M5.74 -7.60 H10.30 L6.88 0.00 " fill="none" stroke="#d8c23c" stroke-width="1.05" stroke-linecap="square" stroke-linejoin="miter"/>
<path transform="translate(1138,461) rotate(-45) translate(0,3.80)" d="M-30.17 -7.60 H-34.58 V-4.18 H-31.31 L-30.17 -3.04 V-1.14 L-31.31 0.00 H-33.59 L-34.73 -1.14 M-28.04 -7.60 L-25.00 0.00 L-21.96 -7.60 M-19.84 2.43 H-13.76 M-11.63 -6.46 L-10.49 -7.60 H-8.21 L-7.07 -6.46 V-4.71 L-8.21 -3.80 H-10.11 M-8.21 -3.80 L-7.07 -2.89 V-1.14 L-8.21 0.00 H-10.49 L-11.63 -1.14 M-4.94 0.00 L-1.71 -7.60 L1.52 0.00 M-3.80 -2.66 H0.38 M3.65 2.43 H9.73 M13.38 -7.60 H16.42 L17.94 -6.08 V-1.52 L16.42 0.00 H13.38 L11.86 -1.52 V-6.08 ZM20.06 -7.60 V-1.52 L21.58 0.00 H24.62 L26.14 -1.52 V-7.60 M28.27 -7.60 H34.73 M31.50 -7.60 V0.00 " fill="none" stroke="#d8c23c" stroke-width="1.05" stroke-linecap="square" stroke-linejoin="miter"/>
<path transform="translate(1132,489) rotate(-90) translate(0,3.80)" d="M-10.30 0.00 V-7.60 L-3.84 0.00 V-7.60 M3.61 -6.46 L2.47 -7.22 H-0.57 L-1.71 -6.08 V-4.71 L-0.57 -3.80 H2.47 L3.61 -2.89 V-1.14 L2.47 -0.38 H-0.57 L-1.71 -1.37 M0.95 -8.36 V0.76 M5.74 -7.60 H10.30 L6.88 0.00 " fill="none" stroke="#d8c23c" stroke-width="1.05" stroke-linecap="square" stroke-linejoin="miter"/>
<path transform="translate(1126,535) rotate(-45) translate(0,3.80)" d="M-22.80 0.00 V-7.60 L-16.34 0.00 V-7.60 M-8.89 -6.46 L-10.03 -7.22 H-13.07 L-14.21 -6.08 V-4.71 L-13.07 -3.80 H-10.03 L-8.89 -2.89 V-1.14 L-10.03 -0.38 H-13.07 L-14.21 -1.37 M-11.55 -8.36 V0.76 M-6.76 -7.60 H-2.20 L-5.62 0.00 M1.44 -7.60 H4.48 L6.00 -6.08 V-1.52 L4.48 0.00 H1.44 L-0.08 -1.52 V-6.08 ZM8.13 -7.60 V-1.52 L9.65 0.00 H12.69 L14.21 -1.52 V-7.60 M16.34 -7.60 H22.80 M19.57 -7.60 V0.00 " fill="none" stroke="#d8c23c" stroke-width="1.05" stroke-linecap="square" stroke-linejoin="miter"/>
<path transform="translate(820,434) rotate(-90) translate(0,3.80)" d="M-10.30 0.00 V-7.60 L-3.84 0.00 V-7.60 M3.61 -6.46 L2.47 -7.22 H-0.57 L-1.71 -6.08 V-4.71 L-0.57 -3.80 H2.47 L3.61 -2.89 V-1.14 L2.47 -0.38 H-0.57 L-1.71 -1.37 M0.95 -8.36 V0.76 M5.74 -6.46 L6.88 -7.60 H9.16 L10.30 -6.46 V-4.71 L9.16 -3.80 H7.26 M9.16 -3.80 L10.30 -2.89 V-1.14 L9.16 0.00 H6.88 L5.74 -1.14 " fill="none" stroke="#d8c23c" stroke-width="1.05" stroke-linecap="square" stroke-linejoin="miter"/>
<path transform="translate(889,422) rotate(-45) translate(0,3.80)" d="M-5.36 -6.46 L-6.65 -7.60 H-11.29 L-12.58 -6.31 V-1.29 L-11.29 0.00 H-6.65 L-5.36 -1.29 V-3.42 H-8.63 M-3.23 0.00 V-7.60 L3.23 0.00 V-7.60 M5.36 0.00 V-7.60 H10.53 L12.58 -5.55 V-2.05 L10.53 0.00 Z" fill="none" stroke="#d8c23c" stroke-width="1.05" stroke-linecap="square" stroke-linejoin="miter"/>
<path transform="translate(914.5,466) rotate(0) translate(0,3.80)" d="M-5.36 -6.46 L-6.65 -7.60 H-11.29 L-12.58 -6.31 V-1.29 L-11.29 0.00 H-6.65 L-5.36 -1.29 V-3.42 H-8.63 M-3.23 0.00 V-7.60 L3.23 0.00 V-7.60 M5.36 0.00 V-7.60 H10.53 L12.58 -5.55 V-2.05 L10.53 0.00 Z" fill="none" stroke="#d8c23c" stroke-width="1.05" stroke-linecap="square" stroke-linejoin="miter"/>
<path transform="translate(983,465) rotate(90) translate(0,3.80)" d="M-11.74 -3.80 H-15.16 L-16.30 -4.94 V-6.46 L-15.16 -7.60 H-12.88 L-11.74 -6.46 V-1.90 L-13.26 0.00 H-15.54 M-9.61 -7.60 L-6.57 0.00 L-3.53 -7.60 M-1.41 2.43 H4.67 M7.26 0.00 V-7.60 M9.84 0.00 V-7.60 L16.30 0.00 V-7.60 " fill="none" stroke="#d8c23c" stroke-width="1.05" stroke-linecap="square" stroke-linejoin="miter"/>
<path transform="translate(820.7,509.6) rotate(-90) translate(0,3.80)" d="M-5.36 -6.46 L-6.65 -7.60 H-11.29 L-12.58 -6.31 V-1.29 L-11.29 0.00 H-6.65 L-5.36 -1.29 V-3.42 H-8.63 M-3.23 0.00 V-7.60 L3.23 0.00 V-7.60 M5.36 0.00 V-7.60 H10.53 L12.58 -5.55 V-2.05 L10.53 0.00 Z" fill="none" stroke="#d8c23c" stroke-width="1.05" stroke-linecap="square" stroke-linejoin="miter"/>
<path transform="translate(865,493) rotate(-90) translate(0,3.80)" d="M-5.36 -6.46 L-6.65 -7.60 H-11.29 L-12.58 -6.31 V-1.29 L-11.29 0.00 H-6.65 L-5.36 -1.29 V-3.42 H-8.63 M-3.23 0.00 V-7.60 L3.23 0.00 V-7.60 M5.36 0.00 V-7.60 H10.53 L12.58 -5.55 V-2.05 L10.53 0.00 Z" fill="none" stroke="#d8c23c" stroke-width="1.05" stroke-linecap="square" stroke-linejoin="miter"/>
<path transform="translate(900,547) rotate(0) translate(0,3.80)" d="M-10.30 0.00 V-7.60 L-3.84 0.00 V-7.60 M3.61 -6.46 L2.47 -7.22 H-0.57 L-1.71 -6.08 V-4.71 L-0.57 -3.80 H2.47 L3.61 -2.89 V-1.14 L2.47 -0.38 H-0.57 L-1.71 -1.37 M0.95 -8.36 V0.76 M5.74 -6.46 L6.88 -7.60 H9.16 L10.30 -6.46 V-4.71 L9.16 -3.80 H7.26 M9.16 -3.80 L10.30 -2.89 V-1.14 L9.16 0.00 H6.88 L5.74 -1.14 " fill="none" stroke="#d8c23c" stroke-width="1.05" stroke-linecap="square" stroke-linejoin="miter"/>
<path transform="translate(899.5,565.5) rotate(0) translate(0,3.80)" d="M-5.36 -6.46 L-6.65 -7.60 H-11.29 L-12.58 -6.31 V-1.29 L-11.29 0.00 H-6.65 L-5.36 -1.29 V-3.42 H-8.63 M-3.23 0.00 V-7.60 L3.23 0.00 V-7.60 M5.36 0.00 V-7.60 H10.53 L12.58 -5.55 V-2.05 L10.53 0.00 Z" fill="none" stroke="#d8c23c" stroke-width="1.05" stroke-linecap="square" stroke-linejoin="miter"/>
<path transform="translate(986.5,541) rotate(0) translate(0,3.80)" d="M-10.30 0.00 V-7.60 L-3.84 0.00 V-7.60 M3.61 -6.46 L2.47 -7.22 H-0.57 L-1.71 -6.08 V-4.71 L-0.57 -3.80 H2.47 L3.61 -2.89 V-1.14 L2.47 -0.38 H-0.57 L-1.71 -1.37 M0.95 -8.36 V0.76 M5.74 -6.46 L6.88 -7.60 H9.16 L10.30 -6.46 V-4.71 L9.16 -3.80 H7.26 M9.16 -3.80 L10.30 -2.89 V-1.14 L9.16 0.00 H6.88 L5.74 -1.14 " fill="none" stroke="#d8c23c" stroke-width="1.05" stroke-linecap="square" stroke-linejoin="miter"/>
<path transform="translate(883.8,611.4) rotate(-90) translate(0,3.80)" d="M-5.36 -6.46 L-6.65 -7.60 H-11.29 L-12.58 -6.31 V-1.29 L-11.29 0.00 H-6.65 L-5.36 -1.29 V-3.42 H-8.63 M-3.23 0.00 V-7.60 L3.23 0.00 V-7.60 M5.36 0.00 V-7.60 H10.53 L12.58 -5.55 V-2.05 L10.53 0.00 Z" fill="none" stroke="#d8c23c" stroke-width="1.05" stroke-linecap="square" stroke-linejoin="miter"/>
<path transform="translate(833.5,621.8) rotate(-90) translate(0,3.80)" d="M-5.36 -6.46 L-6.65 -7.60 H-11.29 L-12.58 -6.31 V-1.29 L-11.29 0.00 H-6.65 L-5.36 -1.29 V-3.42 H-8.63 M-3.23 0.00 V-7.60 L3.23 0.00 V-7.60 M5.36 0.00 V-7.60 H10.53 L12.58 -5.55 V-2.05 L10.53 0.00 Z" fill="none" stroke="#d8c23c" stroke-width="1.05" stroke-linecap="square" stroke-linejoin="miter"/>
<path transform="translate(874.5,651) rotate(-45) translate(0,3.80)" d="M-9.35 0.00 V-7.60 L-2.89 0.00 V-7.60 M4.56 -6.46 L3.42 -7.22 H0.38 L-0.76 -6.08 V-4.71 L0.38 -3.80 H3.42 L4.56 -2.89 V-1.14 L3.42 -0.38 H0.38 L-0.76 -1.37 M1.90 -8.36 V0.76 M6.84 -5.93 L8.97 -7.60 V0.00 " fill="none" stroke="#d8c23c" stroke-width="1.05" stroke-linecap="square" stroke-linejoin="miter"/>
<path transform="translate(883.8,726.7) rotate(-90) translate(0,3.80)" d="M-5.36 -6.46 L-6.65 -7.60 H-11.29 L-12.58 -6.31 V-1.29 L-11.29 0.00 H-6.65 L-5.36 -1.29 V-3.42 H-8.63 M-3.23 0.00 V-7.60 L3.23 0.00 V-7.60 M5.36 0.00 V-7.60 H10.53 L12.58 -5.55 V-2.05 L10.53 0.00 Z" fill="none" stroke="#d8c23c" stroke-width="1.05" stroke-linecap="square" stroke-linejoin="miter"/>
<path transform="translate(938.4,702.5) rotate(45) translate(0,3.80)" d="M-5.36 -6.46 L-6.65 -7.60 H-11.29 L-12.58 -6.31 V-1.29 L-11.29 0.00 H-6.65 L-5.36 -1.29 V-3.42 H-8.63 M-3.23 0.00 V-7.60 L3.23 0.00 V-7.60 M5.36 0.00 V-7.60 H10.53 L12.58 -5.55 V-2.05 L10.53 0.00 Z" fill="none" stroke="#d8c23c" stroke-width="1.05" stroke-linecap="square" stroke-linejoin="miter"/>
<path transform="translate(1020,738) rotate(0) translate(0,3.80)" d="M-5.36 -6.46 L-6.65 -7.60 H-11.29 L-12.58 -6.31 V-1.29 L-11.29 0.00 H-6.65 L-5.36 -1.29 V-3.42 H-8.63 M-3.23 0.00 V-7.60 L3.23 0.00 V-7.60 M5.36 0.00 V-7.60 H10.53 L12.58 -5.55 V-2.05 L10.53 0.00 Z" fill="none" stroke="#d8c23c" stroke-width="1.05" stroke-linecap="square" stroke-linejoin="miter"/>
<path transform="translate(963.5,764) rotate(0) translate(0,3.80)" d="M-10.30 0.00 V-7.60 L-3.84 0.00 V-7.60 M3.61 -6.46 L2.47 -7.22 H-0.57 L-1.71 -6.08 V-4.71 L-0.57 -3.80 H2.47 L3.61 -2.89 V-1.14 L2.47 -0.38 H-0.57 L-1.71 -1.37 M0.95 -8.36 V0.76 M6.88 -7.60 H9.16 L10.30 -6.46 V-4.94 L9.16 -3.80 H6.88 L5.74 -4.94 V-6.46 ZM6.88 -3.80 L5.74 -2.66 V-1.14 L6.88 0.00 H9.16 L10.30 -1.14 V-2.66 L9.16 -3.80 " fill="none" stroke="#d8c23c" stroke-width="1.05" stroke-linecap="square" stroke-linejoin="miter"/>
<path transform="translate(992,783) rotate(0) translate(0,3.80)" d="M-5.36 -6.46 L-6.65 -7.60 H-11.29 L-12.58 -6.31 V-1.29 L-11.29 0.00 H-6.65 L-5.36 -1.29 V-3.42 H-8.63 M-3.23 0.00 V-7.60 L3.23 0.00 V-7.60 M5.36 0.00 V-7.60 H10.53 L12.58 -5.55 V-2.05 L10.53 0.00 Z" fill="none" stroke="#d8c23c" stroke-width="1.05" stroke-linecap="square" stroke-linejoin="miter"/>
<path transform="translate(1051.6,764) rotate(0) translate(0,3.80)" d="M-10.30 0.00 V-7.60 L-3.84 0.00 V-7.60 M3.61 -6.46 L2.47 -7.22 H-0.57 L-1.71 -6.08 V-4.71 L-0.57 -3.80 H2.47 L3.61 -2.89 V-1.14 L2.47 -0.38 H-0.57 L-1.71 -1.37 M0.95 -8.36 V0.76 M6.88 -7.60 H9.16 L10.30 -6.46 V-4.94 L9.16 -3.80 H6.88 L5.74 -4.94 V-6.46 ZM6.88 -3.80 L5.74 -2.66 V-1.14 L6.88 0.00 H9.16 L10.30 -1.14 V-2.66 L9.16 -3.80 " fill="none" stroke="#d8c23c" stroke-width="1.05" stroke-linecap="square" stroke-linejoin="miter"/>
<path transform="translate(1091.7,783) rotate(0) translate(0,3.80)" d="M-5.36 -6.46 L-6.65 -7.60 H-11.29 L-12.58 -6.31 V-1.29 L-11.29 0.00 H-6.65 L-5.36 -1.29 V-3.42 H-8.63 M-3.23 0.00 V-7.60 L3.23 0.00 V-7.60 M5.36 0.00 V-7.60 H10.53 L12.58 -5.55 V-2.05 L10.53 0.00 Z" fill="none" stroke="#d8c23c" stroke-width="1.05" stroke-linecap="square" stroke-linejoin="miter"/>
<path transform="translate(1013.4,638.7) rotate(0) translate(0,3.80)" d="M-9.35 0.00 V-7.60 L-2.89 0.00 V-7.60 M4.56 -6.46 L3.42 -7.22 H0.38 L-0.76 -6.08 V-4.71 L0.38 -3.80 H3.42 L4.56 -2.89 V-1.14 L3.42 -0.38 H0.38 L-0.76 -1.37 M1.90 -8.36 V0.76 M6.84 -5.93 L8.97 -7.60 V0.00 " fill="none" stroke="#d8c23c" stroke-width="1.05" stroke-linecap="square" stroke-linejoin="miter"/>
<path transform="translate(1110.5,597) rotate(0) translate(0,3.80)" d="M-10.30 0.00 V-7.60 L-3.84 0.00 V-7.60 M3.61 -6.46 L2.47 -7.22 H-0.57 L-1.71 -6.08 V-4.71 L-0.57 -3.80 H2.47 L3.61 -2.89 V-1.14 L2.47 -0.38 H-0.57 L-1.71 -1.37 M0.95 -8.36 V0.76 M5.74 -6.46 L6.88 -7.60 H9.16 L10.30 -6.46 V-4.71 L9.16 -3.80 H7.26 M9.16 -3.80 L10.30 -2.89 V-1.14 L9.16 0.00 H6.88 L5.74 -1.14 " fill="none" stroke="#d8c23c" stroke-width="1.05" stroke-linecap="square" stroke-linejoin="miter"/>
<path transform="translate(1075.5,689.6) rotate(0) translate(0,3.80)" d="M-29.22 -7.60 H-33.63 V-4.18 H-30.36 L-29.22 -3.04 V-1.14 L-30.36 0.00 H-32.64 L-33.78 -1.14 M-27.09 -7.60 L-24.05 0.00 L-21.01 -7.60 M-18.89 2.43 H-12.81 M-10.53 -5.93 L-8.40 -7.60 V0.00 M-5.89 0.00 L-2.66 -7.60 L0.57 0.00 M-4.75 -2.66 H-0.57 M2.70 2.43 H8.78 M12.43 -7.60 H15.47 L16.99 -6.08 V-1.52 L15.47 0.00 H12.43 L10.91 -1.52 V-6.08 ZM19.11 -7.60 V-1.52 L20.63 0.00 H23.67 L25.19 -1.52 V-7.60 M27.32 -7.60 H33.78 M30.55 -7.60 V0.00 " fill="none" stroke="#d8c23c" stroke-width="1.05" stroke-linecap="square" stroke-linejoin="miter"/>
<path transform="translate(1047,569) rotate(45) translate(0,3.80)" d="M-10.30 0.00 V-7.60 L-3.84 0.00 V-7.60 M3.61 -6.46 L2.47 -7.22 H-0.57 L-1.71 -6.08 V-4.71 L-0.57 -3.80 H2.47 L3.61 -2.89 V-1.14 L2.47 -0.38 H-0.57 L-1.71 -1.37 M0.95 -8.36 V0.76 M5.74 -6.46 L6.88 -7.60 H9.16 L10.30 -6.46 V-4.71 L9.16 -3.80 H7.26 M9.16 -3.80 L10.30 -2.89 V-1.14 L9.16 0.00 H6.88 L5.74 -1.14 " fill="none" stroke="#d8c23c" stroke-width="1.05" stroke-linecap="square" stroke-linejoin="miter"/>
<path transform="translate(1110.7,669) rotate(45) translate(0,3.80)" d="M-38.57 -6.46 L-37.43 -7.60 H-35.15 L-34.01 -6.46 V-4.71 L-35.15 -3.80 H-37.05 M-35.15 -3.80 L-34.01 -2.89 V-1.14 L-35.15 0.00 H-37.43 L-38.57 -1.14 M-31.50 0.00 V-0.68 M-28.99 -6.46 L-27.85 -7.60 H-25.57 L-24.43 -6.46 V-4.71 L-25.57 -3.80 H-27.47 M-25.57 -3.80 L-24.43 -2.89 V-1.14 L-25.57 0.00 H-27.85 L-28.99 -1.14 M-22.31 -7.60 L-19.27 0.00 L-16.23 -7.60 M-14.10 2.43 H-8.02 M-5.74 -5.93 L-3.61 -7.60 V0.00 M-1.10 0.00 L2.13 -7.60 L5.36 0.00 M0.04 -2.66 H4.22 M7.49 2.43 H13.57 M17.21 -7.60 H20.25 L21.77 -6.08 V-1.52 L20.25 0.00 H17.21 L15.69 -1.52 V-6.08 ZM23.90 -7.60 V-1.52 L25.42 0.00 H28.46 L29.98 -1.52 V-7.60 M32.11 -7.60 H38.57 M35.34 -7.60 V0.00 " fill="none" stroke="#d8c23c" stroke-width="1.05" stroke-linecap="square" stroke-linejoin="miter"/>
<path transform="translate(1129.5,649) rotate(45) translate(0,3.80)" d="M-9.35 0.00 V-7.60 L-2.89 0.00 V-7.60 M4.56 -6.46 L3.42 -7.22 H0.38 L-0.76 -6.08 V-4.71 L0.38 -3.80 H3.42 L4.56 -2.89 V-1.14 L3.42 -0.38 H0.38 L-0.76 -1.37 M1.90 -8.36 V0.76 M6.84 -5.93 L8.97 -7.60 V0.00 " fill="none" stroke="#d8c23c" stroke-width="1.05" stroke-linecap="square" stroke-linejoin="miter"/>
<path transform="translate(1196.6,649) rotate(45) translate(0,3.80)" d="M-10.30 0.00 V-7.60 L-3.84 0.00 V-7.60 M3.61 -6.46 L2.47 -7.22 H-0.57 L-1.71 -6.08 V-4.71 L-0.57 -3.80 H2.47 L3.61 -2.89 V-1.14 L2.47 -0.38 H-0.57 L-1.71 -1.37 M0.95 -8.36 V0.76 M5.74 -6.46 L6.88 -7.60 H9.16 L10.30 -6.46 V-4.71 L9.16 -3.80 H7.26 M9.16 -3.80 L10.30 -2.89 V-1.14 L9.16 0.00 H6.88 L5.74 -1.14 " fill="none" stroke="#d8c23c" stroke-width="1.05" stroke-linecap="square" stroke-linejoin="miter"/>
<path transform="translate(1237.5,676.4) rotate(0) translate(0,3.80)" d="M-9.35 0.00 V-7.60 L-2.89 0.00 V-7.60 M4.56 -6.46 L3.42 -7.22 H0.38 L-0.76 -6.08 V-4.71 L0.38 -3.80 H3.42 L4.56 -2.89 V-1.14 L3.42 -0.38 H0.38 L-0.76 -1.37 M1.90 -8.36 V0.76 M6.84 -5.93 L8.97 -7.60 V0.00 " fill="none" stroke="#d8c23c" stroke-width="1.05" stroke-linecap="square" stroke-linejoin="miter"/>
<path transform="translate(1250,509.5) rotate(-90) translate(0,3.80)" d="M-10.30 0.00 V-7.60 L-3.84 0.00 V-7.60 M3.61 -6.46 L2.47 -7.22 H-0.57 L-1.71 -6.08 V-4.71 L-0.57 -3.80 H2.47 L3.61 -2.89 V-1.14 L2.47 -0.38 H-0.57 L-1.71 -1.37 M0.95 -8.36 V0.76 M6.88 -7.60 H9.16 L10.30 -6.46 V-4.94 L9.16 -3.80 H6.88 L5.74 -4.94 V-6.46 ZM6.88 -3.80 L5.74 -2.66 V-1.14 L6.88 0.00 H9.16 L10.30 -1.14 V-2.66 L9.16 -3.80 " fill="none" stroke="#d8c23c" stroke-width="1.05" stroke-linecap="square" stroke-linejoin="miter"/>
<path transform="translate(1273,434.7) rotate(0) translate(0,3.80)" d="M-10.30 0.00 V-7.60 L-3.84 0.00 V-7.60 M3.61 -6.46 L2.47 -7.22 H-0.57 L-1.71 -6.08 V-4.71 L-0.57 -3.80 H2.47 L3.61 -2.89 V-1.14 L2.47 -0.38 H-0.57 L-1.71 -1.37 M0.95 -8.36 V0.76 M6.88 -7.60 H9.16 L10.30 -6.46 V-4.94 L9.16 -3.80 H6.88 L5.74 -4.94 V-6.46 ZM6.88 -3.80 L5.74 -2.66 V-1.14 L6.88 0.00 H9.16 L10.30 -1.14 V-2.66 L9.16 -3.80 " fill="none" stroke="#d8c23c" stroke-width="1.05" stroke-linecap="square" stroke-linejoin="miter"/>
<path transform="translate(1335.6,434.7) rotate(0) translate(0,3.80)" d="M-10.30 0.00 V-7.60 L-3.84 0.00 V-7.60 M3.61 -6.46 L2.47 -7.22 H-0.57 L-1.71 -6.08 V-4.71 L-0.57 -3.80 H2.47 L3.61 -2.89 V-1.14 L2.47 -0.38 H-0.57 L-1.71 -1.37 M0.95 -8.36 V0.76 M6.88 -7.60 H9.16 L10.30 -6.46 V-4.94 L9.16 -3.80 H6.88 L5.74 -4.94 V-6.46 ZM6.88 -3.80 L5.74 -2.66 V-1.14 L6.88 0.00 H9.16 L10.30 -1.14 V-2.66 L9.16 -3.80 " fill="none" stroke="#d8c23c" stroke-width="1.05" stroke-linecap="square" stroke-linejoin="miter"/>
<path transform="translate(1336.8,449.5) rotate(45) translate(0,3.80)" d="M-30.17 -7.60 H-34.58 V-4.18 H-31.31 L-30.17 -3.04 V-1.14 L-31.31 0.00 H-33.59 L-34.73 -1.14 M-28.04 -7.60 L-25.00 0.00 L-21.96 -7.60 M-19.84 2.43 H-13.76 M-11.63 -6.46 L-10.49 -7.60 H-8.21 L-7.07 -6.46 V-4.71 L-8.21 -3.80 H-10.11 M-8.21 -3.80 L-7.07 -2.89 V-1.14 L-8.21 0.00 H-10.49 L-11.63 -1.14 M-4.94 0.00 L-1.71 -7.60 L1.52 0.00 M-3.80 -2.66 H0.38 M3.65 2.43 H9.73 M13.38 -7.60 H16.42 L17.94 -6.08 V-1.52 L16.42 0.00 H13.38 L11.86 -1.52 V-6.08 ZM20.06 -7.60 V-1.52 L21.58 0.00 H24.62 L26.14 -1.52 V-7.60 M28.27 -7.60 H34.73 M31.50 -7.60 V0.00 " fill="none" stroke="#d8c23c" stroke-width="1.05" stroke-linecap="square" stroke-linejoin="miter"/>
<path transform="translate(1337,578) rotate(0) translate(0,3.80)" d="M-9.35 0.00 V-7.60 L-2.89 0.00 V-7.60 M4.56 -6.46 L3.42 -7.22 H0.38 L-0.76 -6.08 V-4.71 L0.38 -3.80 H3.42 L4.56 -2.89 V-1.14 L3.42 -0.38 H0.38 L-0.76 -1.37 M1.90 -8.36 V0.76 M6.84 -5.93 L8.97 -7.60 V0.00 " fill="none" stroke="#d8c23c" stroke-width="1.05" stroke-linecap="square" stroke-linejoin="miter"/>
<path transform="translate(1286.6,629) rotate(45) translate(0,3.80)" d="M-10.30 0.00 V-7.60 L-3.84 0.00 V-7.60 M3.61 -6.46 L2.47 -7.22 H-0.57 L-1.71 -6.08 V-4.71 L-0.57 -3.80 H2.47 L3.61 -2.89 V-1.14 L2.47 -0.38 H-0.57 L-1.71 -1.37 M0.95 -8.36 V0.76 M6.88 -7.60 H9.16 L10.30 -6.46 V-4.94 L9.16 -3.80 H6.88 L5.74 -4.94 V-6.46 ZM6.88 -3.80 L5.74 -2.66 V-1.14 L6.88 0.00 H9.16 L10.30 -1.14 V-2.66 L9.16 -3.80 " fill="none" stroke="#d8c23c" stroke-width="1.05" stroke-linecap="square" stroke-linejoin="miter"/>
<path transform="translate(1319,638.7) rotate(-90) translate(0,3.80)" d="M-9.35 0.00 V-7.60 L-2.89 0.00 V-7.60 M4.56 -6.46 L3.42 -7.22 H0.38 L-0.76 -6.08 V-4.71 L0.38 -3.80 H3.42 L4.56 -2.89 V-1.14 L3.42 -0.38 H0.38 L-0.76 -1.37 M1.90 -8.36 V0.76 M6.84 -5.93 L8.97 -7.60 V0.00 " fill="none" stroke="#d8c23c" stroke-width="1.05" stroke-linecap="square" stroke-linejoin="miter"/>
<path transform="translate(1332,698.5) rotate(-90) translate(0,3.80)" d="M-10.30 0.00 V-7.60 L-3.84 0.00 V-7.60 M3.61 -6.46 L2.47 -7.22 H-0.57 L-1.71 -6.08 V-4.71 L-0.57 -3.80 H2.47 L3.61 -2.89 V-1.14 L2.47 -0.38 H-0.57 L-1.71 -1.37 M0.95 -8.36 V0.76 M6.88 -7.60 H9.16 L10.30 -6.46 V-4.94 L9.16 -3.80 H6.88 L5.74 -4.94 V-6.46 ZM6.88 -3.80 L5.74 -2.66 V-1.14 L6.88 0.00 H9.16 L10.30 -1.14 V-2.66 L9.16 -3.80 " fill="none" stroke="#d8c23c" stroke-width="1.05" stroke-linecap="square" stroke-linejoin="miter"/>
<path transform="translate(1362,717) rotate(-90) translate(0,3.80)" d="M-5.36 -6.46 L-6.65 -7.60 H-11.29 L-12.58 -6.31 V-1.29 L-11.29 0.00 H-6.65 L-5.36 -1.29 V-3.42 H-8.63 M-3.23 0.00 V-7.60 L3.23 0.00 V-7.60 M5.36 0.00 V-7.60 H10.53 L12.58 -5.55 V-2.05 L10.53 0.00 Z" fill="none" stroke="#d8c23c" stroke-width="1.05" stroke-linecap="square" stroke-linejoin="miter"/>
<path transform="translate(1332,735) rotate(-90) translate(0,3.80)" d="M-9.35 0.00 V-7.60 L-2.89 0.00 V-7.60 M4.56 -6.46 L3.42 -7.22 H0.38 L-0.76 -6.08 V-4.71 L0.38 -3.80 H3.42 L4.56 -2.89 V-1.14 L3.42 -0.38 H0.38 L-0.76 -1.37 M1.90 -8.36 V0.76 M6.84 -5.93 L8.97 -7.60 V0.00 " fill="none" stroke="#d8c23c" stroke-width="1.05" stroke-linecap="square" stroke-linejoin="miter"/>
<path transform="translate(1309.6,748.6) rotate(-45) translate(0,3.80)" d="M-10.30 0.00 V-7.60 L-3.84 0.00 V-7.60 M3.61 -6.46 L2.47 -7.22 H-0.57 L-1.71 -6.08 V-4.71 L-0.57 -3.80 H2.47 L3.61 -2.89 V-1.14 L2.47 -0.38 H-0.57 L-1.71 -1.37 M0.95 -8.36 V0.76 M6.88 -7.60 H9.16 L10.30 -6.46 V-4.94 L9.16 -3.80 H6.88 L5.74 -4.94 V-6.46 ZM6.88 -3.80 L5.74 -2.66 V-1.14 L6.88 0.00 H9.16 L10.30 -1.14 V-2.66 L9.16 -3.80 " fill="none" stroke="#d8c23c" stroke-width="1.05" stroke-linecap="square" stroke-linejoin="miter"/>
<path transform="translate(1338,764.6) rotate(0) translate(0,3.80)" d="M-5.36 -6.46 L-6.65 -7.60 H-11.29 L-12.58 -6.31 V-1.29 L-11.29 0.00 H-6.65 L-5.36 -1.29 V-3.42 H-8.63 M-3.23 0.00 V-7.60 L3.23 0.00 V-7.60 M5.36 0.00 V-7.60 H10.53 L12.58 -5.55 V-2.05 L10.53 0.00 Z" fill="none" stroke="#d8c23c" stroke-width="1.05" stroke-linecap="square" stroke-linejoin="miter"/>
<path transform="translate(1179.6,757) rotate(0) translate(0,3.80)" d="M-5.36 -6.46 L-6.65 -7.60 H-11.29 L-12.58 -6.31 V-1.29 L-11.29 0.00 H-6.65 L-5.36 -1.29 V-3.42 H-8.63 M-3.23 0.00 V-7.60 L3.23 0.00 V-7.60 M5.36 0.00 V-7.60 H10.53 L12.58 -5.55 V-2.05 L10.53 0.00 Z" fill="none" stroke="#d8c23c" stroke-width="1.05" stroke-linecap="square" stroke-linejoin="miter"/>
<path transform="translate(1216.5,769.4) rotate(0) translate(0,3.80)" d="M-10.30 0.00 V-7.60 L-3.84 0.00 V-7.60 M3.61 -6.46 L2.47 -7.22 H-0.57 L-1.71 -6.08 V-4.71 L-0.57 -3.80 H2.47 L3.61 -2.89 V-1.14 L2.47 -0.38 H-0.57 L-1.71 -1.37 M0.95 -8.36 V0.76 M6.88 -7.60 H9.16 L10.30 -6.46 V-4.94 L9.16 -3.80 H6.88 L5.74 -4.94 V-6.46 ZM6.88 -3.80 L5.74 -2.66 V-1.14 L6.88 0.00 H9.16 L10.30 -1.14 V-2.66 L9.16 -3.80 " fill="none" stroke="#d8c23c" stroke-width="1.05" stroke-linecap="square" stroke-linejoin="miter"/>
<path transform="translate(1193.4,782.7) rotate(0) translate(0,3.80)" d="M-5.36 -6.46 L-6.65 -7.60 H-11.29 L-12.58 -6.31 V-1.29 L-11.29 0.00 H-6.65 L-5.36 -1.29 V-3.42 H-8.63 M-3.23 0.00 V-7.60 L3.23 0.00 V-7.60 M5.36 0.00 V-7.60 H10.53 L12.58 -5.55 V-2.05 L10.53 0.00 Z" fill="none" stroke="#d8c23c" stroke-width="1.05" stroke-linecap="square" stroke-linejoin="miter"/>
<path transform="translate(1276,717.6) rotate(45) translate(0,3.80)" d="M-10.30 0.00 V-7.60 L-3.84 0.00 V-7.60 M3.61 -6.46 L2.47 -7.22 H-0.57 L-1.71 -6.08 V-4.71 L-0.57 -3.80 H2.47 L3.61 -2.89 V-1.14 L2.47 -0.38 H-0.57 L-1.71 -1.37 M0.95 -8.36 V0.76 M5.74 -6.46 L6.88 -7.60 H9.16 L10.30 -6.46 V-4.71 L9.16 -3.80 H7.26 M9.16 -3.80 L10.30 -2.89 V-1.14 L9.16 0.00 H6.88 L5.74 -1.14 " fill="none" stroke="#d8c23c" stroke-width="1.05" stroke-linecap="square" stroke-linejoin="miter"/>
<path transform="translate(885.3,156) rotate(-90) translate(0,5.07)" d="M-7.16 -8.63 L-8.88 -10.15 H-15.07 L-16.80 -8.42 V-1.73 L-15.07 0.00 H-8.88 L-7.16 -1.73 V-4.57 H-11.52 M-4.31 0.00 V-10.15 L4.31 0.00 V-10.15 M7.16 0.00 V-10.15 H14.06 L16.80 -7.41 V-2.74 L14.06 0.00 Z" fill="none" stroke="#d2d2d2" stroke-width="1.2" stroke-linecap="square" stroke-linejoin="miter"/>
<path transform="translate(948.8,156) rotate(-90) translate(0,5.07)" d="M-15.28 0.00 V-10.15 H-9.69 L-7.66 -8.12 V-6.29 L-9.69 -4.57 H-15.28 M-4.82 -10.15 L-2.59 0.00 L0.00 -6.60 L2.59 0.00 L4.82 -10.15 M7.66 0.00 V-10.15 H13.25 L14.97 -8.63 V-6.60 L13.25 -5.07 H7.66 M11.72 -5.07 L15.28 0.00 " fill="none" stroke="#d2d2d2" stroke-width="1.2" stroke-linecap="square" stroke-linejoin="miter"/>
<path transform="translate(916,199.5) rotate(0) translate(0,5.42)" d="M-35.86 -9.22 L-37.70 -10.85 H-44.32 L-46.17 -9.01 V-1.84 L-44.32 0.00 H-37.70 L-35.86 -1.84 V-4.88 H-40.52 M-32.82 0.00 V-10.85 L-23.60 0.00 V-10.85 M-20.56 0.00 V-10.85 H-13.18 L-10.25 -7.92 V-2.93 L-13.18 0.00 ZM-7.22 0.00 V-10.85 H-1.25 L0.38 -9.22 V-7.05 L-1.25 -5.42 H-7.22 M-1.25 -5.42 L0.92 -3.80 V-1.63 L-0.71 0.00 H-7.22 M3.96 0.00 V-10.85 H9.93 L11.77 -9.22 V-7.05 L9.93 -5.42 H3.96 M8.30 -5.42 L12.10 0.00 M22.73 -10.85 H15.14 V0.00 H22.73 M15.14 -5.42 H20.56 M25.77 0.00 L30.38 -10.85 L34.99 0.00 M27.40 -3.80 H33.36 M38.03 -10.85 V0.00 M46.17 -10.85 L38.03 -3.80 M40.74 -6.51 L46.17 0.00 " fill="none" stroke="#d2d2d2" stroke-width="1.2" stroke-linecap="square" stroke-linejoin="miter"/>
<path transform="translate(915.5,212) rotate(0) translate(0,4.90)" d="M-6.91 -8.33 L-8.57 -9.80 H-14.55 L-16.22 -8.13 V-1.67 L-14.55 0.00 H-8.57 L-6.91 -1.67 V-4.41 H-11.12 M-4.16 0.00 V-9.80 L4.16 0.00 V-9.80 M6.91 0.00 V-9.80 H13.57 L16.22 -7.15 V-2.65 L13.57 0.00 Z" fill="none" stroke="#d2d2d2" stroke-width="1.2" stroke-linecap="square" stroke-linejoin="miter"/>
<path transform="translate(1208,152.6) rotate(-90) translate(0,5.95)" d="M2.38 -11.90 H-1.19 L-3.57 -8.92 V-1.78 L-1.78 0.00 H1.79 L3.57 -1.78 V-5.35 L1.79 -6.90 H-3.57 " fill="none" stroke="#d2d2d2" stroke-width="1.2" stroke-linecap="square" stroke-linejoin="miter"/>
<path transform="translate(1223.5,151.3) rotate(-90) translate(0,5.95)" d="M-8.39 -10.11 L-10.41 -11.90 H-17.67 L-19.69 -9.88 V-2.02 L-17.67 0.00 H-10.41 L-8.39 -2.02 V-5.35 H-13.51 M-5.06 0.00 V-11.90 L5.06 0.00 V-11.90 M8.39 0.00 V-11.90 H16.48 L19.69 -8.69 V-3.21 L16.48 0.00 Z" fill="none" stroke="#d2d2d2" stroke-width="1.2" stroke-linecap="square" stroke-linejoin="miter"/>
<path transform="translate(1208,286) rotate(-90) translate(0,5.95)" d="M2.38 -11.90 H-1.19 L-3.57 -8.92 V-1.78 L-1.78 0.00 H1.79 L3.57 -1.78 V-5.35 L1.79 -6.90 H-3.57 " fill="none" stroke="#d2d2d2" stroke-width="1.2" stroke-linecap="square" stroke-linejoin="miter"/>
<path transform="translate(1223.5,284.5) rotate(-90) translate(0,5.95)" d="M-8.39 -10.11 L-10.41 -11.90 H-17.67 L-19.69 -9.88 V-2.02 L-17.67 0.00 H-10.41 L-8.39 -2.02 V-5.35 H-13.51 M-5.06 0.00 V-11.90 L5.06 0.00 V-11.90 M8.39 0.00 V-11.90 H16.48 L19.69 -8.69 V-3.21 L16.48 0.00 Z" fill="none" stroke="#d2d2d2" stroke-width="1.2" stroke-linecap="square" stroke-linejoin="miter"/>
<path transform="translate(1095.5,292.6) rotate(0) translate(0,3.32)" d="M-8.68 0.00 V-6.65 H-5.02 L-3.69 -5.32 V-4.12 L-5.02 -2.99 H-8.68 M2.83 -5.65 L1.83 -6.32 H-0.83 L-1.83 -5.32 V-4.12 L-0.83 -3.32 H1.83 L2.83 -2.53 V-1.00 L1.83 -0.33 H-0.83 L-1.83 -1.20 M0.50 -7.32 V0.67 M4.69 -5.65 L5.69 -6.65 H7.68 L8.68 -5.65 V-3.99 L4.69 0.00 H8.68 " fill="none" stroke="#d2d2d2" stroke-width="0.95" stroke-linecap="square" stroke-linejoin="miter"/>
<path transform="translate(1095.3,301) rotate(0) translate(0,3.32)" d="M-34.58 -5.65 L-33.58 -6.65 H-31.59 L-30.59 -5.65 V-4.12 L-31.59 -3.32 H-33.25 M-31.59 -3.32 L-30.59 -2.53 V-1.00 L-31.59 0.00 H-33.58 L-34.58 -1.00 M-28.40 0.00 V-0.60 M-26.20 -5.65 L-25.20 -6.65 H-23.21 L-22.21 -5.65 V-4.12 L-23.21 -3.32 H-24.87 M-23.21 -3.32 L-22.21 -2.53 V-1.00 L-23.21 0.00 H-25.20 L-26.20 -1.00 M-20.35 -6.65 L-17.69 0.00 L-15.03 -6.65 M-13.17 2.13 H-7.85 M-5.98 -5.65 L-4.99 -6.65 H-2.99 L-1.99 -5.65 V-4.12 L-2.99 -3.32 H-4.65 M-2.99 -3.32 L-1.99 -2.53 V-1.00 L-2.99 0.00 H-4.99 L-5.98 -1.00 M-0.13 0.00 L2.69 -6.65 L5.52 0.00 M0.86 -2.33 H4.52 M7.38 2.13 H12.70 M15.89 -6.65 H18.55 L19.88 -5.32 V-1.33 L18.55 0.00 H15.89 L14.56 -1.33 V-5.32 ZM21.75 -6.65 V-1.33 L23.08 0.00 H25.74 L27.07 -1.33 V-6.65 M28.93 -6.65 H34.58 M31.75 -6.65 V0.00 " fill="none" stroke="#d2d2d2" stroke-width="0.95" stroke-linecap="square" stroke-linejoin="miter"/>
<path transform="translate(1095,397) rotate(0) translate(0,3.32)" d="M-7.85 0.00 V-6.65 H-4.19 L-2.86 -5.32 V-4.12 L-4.19 -2.99 H-7.85 M3.66 -5.65 L2.66 -6.32 H0.00 L-1.00 -5.32 V-4.12 L0.00 -3.32 H2.66 L3.66 -2.53 V-1.00 L2.66 -0.33 H0.00 L-1.00 -1.20 M1.33 -7.32 V0.67 M5.65 -5.19 L7.51 -6.65 V0.00 " fill="none" stroke="#d2d2d2" stroke-width="0.95" stroke-linecap="square" stroke-linejoin="miter"/>
<path transform="translate(1095,406) rotate(0) translate(0,3.32)" d="M-11.11 0.00 V-6.65 L-5.45 0.00 V-6.65 M1.06 -5.65 L0.07 -6.32 H-2.59 L-3.59 -5.32 V-4.12 L-2.59 -3.32 H0.07 L1.06 -2.53 V-1.00 L0.07 -0.33 H-2.59 L-3.59 -1.20 M-1.26 -7.32 V0.67 M3.06 -5.19 L4.92 -6.65 V0.00 M8.11 -6.65 H10.11 L11.11 -5.65 V-1.00 L10.11 0.00 H8.11 L7.12 -1.00 V-5.65 Z" fill="none" stroke="#d2d2d2" stroke-width="0.95" stroke-linecap="square" stroke-linejoin="miter"/>
<path transform="translate(1095,452) rotate(0) translate(0,3.32)" d="M-8.68 0.00 V-6.65 H-5.02 L-3.69 -5.32 V-4.12 L-5.02 -2.99 H-8.68 M2.83 -5.65 L1.83 -6.32 H-0.83 L-1.83 -5.32 V-4.12 L-0.83 -3.32 H1.83 L2.83 -2.53 V-1.00 L1.83 -0.33 H-0.83 L-1.83 -1.20 M0.50 -7.32 V0.67 M4.69 -5.65 L5.69 -6.65 H7.68 L8.68 -5.65 V-3.99 L4.69 0.00 H8.68 " fill="none" stroke="#d2d2d2" stroke-width="0.95" stroke-linecap="square" stroke-linejoin="miter"/>
<path transform="translate(1095,460) rotate(0) translate(0,3.32)" d="M-26.40 -6.65 H-30.26 V-3.66 H-27.40 L-26.40 -2.66 V-1.00 L-27.40 0.00 H-29.39 L-30.39 -1.00 M-24.54 -6.65 L-21.88 0.00 L-19.22 -6.65 M-17.36 2.13 H-12.04 M-10.17 -5.65 L-9.18 -6.65 H-7.18 L-6.18 -5.65 V-4.12 L-7.18 -3.32 H-8.84 M-7.18 -3.32 L-6.18 -2.53 V-1.00 L-7.18 0.00 H-9.18 L-10.17 -1.00 M-4.32 0.00 L-1.50 -6.65 L1.33 0.00 M-3.32 -2.33 H0.33 M3.19 2.13 H8.51 M11.70 -6.65 H14.36 L15.69 -5.32 V-1.33 L14.36 0.00 H11.70 L10.37 -1.33 V-5.32 ZM17.56 -6.65 V-1.33 L18.89 0.00 H21.55 L22.88 -1.33 V-6.65 M24.74 -6.65 H30.39 M27.56 -6.65 V0.00 " fill="none" stroke="#d2d2d2" stroke-width="0.95" stroke-linecap="square" stroke-linejoin="miter"/>
<path transform="translate(1095,556) rotate(0) translate(0,3.32)" d="M-7.85 0.00 V-6.65 H-4.19 L-2.86 -5.32 V-4.12 L-4.19 -2.99 H-7.85 M3.66 -5.65 L2.66 -6.32 H0.00 L-1.00 -5.32 V-4.12 L0.00 -3.32 H2.66 L3.66 -2.53 V-1.00 L2.66 -0.33 H0.00 L-1.00 -1.20 M1.33 -7.32 V0.67 M5.65 -5.19 L7.51 -6.65 V0.00 " fill="none" stroke="#d2d2d2" stroke-width="0.95" stroke-linecap="square" stroke-linejoin="miter"/>
<path transform="translate(1095,565) rotate(0) translate(0,3.32)" d="M-9.01 0.00 V-6.65 L-3.36 0.00 V-6.65 M3.16 -5.65 L2.16 -6.32 H-0.50 L-1.50 -5.32 V-4.12 L-0.50 -3.32 H2.16 L3.16 -2.53 V-1.00 L2.16 -0.33 H-0.50 L-1.50 -1.20 M0.83 -7.32 V0.67 M5.02 -6.65 H9.01 L6.02 0.00 " fill="none" stroke="#d2d2d2" stroke-width="0.95" stroke-linecap="square" stroke-linejoin="miter"/>
<path transform="translate(1301,361) rotate(0) translate(0,3.85)" d="M-24.37 -3.85 H-19.75 M-22.06 -6.16 V-1.54 M-17.59 -3.85 H-12.97 M-6.20 -7.70 H-10.66 V-4.24 H-7.35 L-6.20 -3.08 V-1.15 L-7.35 0.00 H-9.66 L-10.82 -1.15 M-4.04 -7.70 L-0.96 0.00 L2.12 -7.70 M4.27 -3.85 H8.89 M11.05 -6.54 L12.20 -7.70 H14.51 L15.67 -6.54 V-4.77 L14.51 -3.85 H12.59 M14.51 -3.85 L15.67 -2.93 V-1.15 L14.51 0.00 H12.20 L11.05 -1.15 M17.83 0.00 L21.10 -7.70 L24.37 0.00 M18.98 -2.69 H23.22 " fill="none" stroke="#bdbdbd" stroke-width="0.95" stroke-linecap="square" stroke-linejoin="miter"/>
<path transform="translate(1225,361) rotate(0) translate(0,3.85)" d="M-25.83 -3.85 H-21.21 M-19.06 -6.54 L-17.90 -7.70 H-15.59 L-14.44 -6.54 V-4.77 L-15.59 -3.85 H-17.52 M-15.59 -3.85 L-14.44 -2.93 V-1.15 L-15.59 0.00 H-17.90 L-19.06 -1.15 M-11.90 0.00 V-0.69 M-9.36 -6.54 L-8.20 -7.70 H-5.89 L-4.74 -6.54 V-4.77 L-5.89 -3.85 H-7.82 M-5.89 -3.85 L-4.74 -2.93 V-1.15 L-5.89 0.00 H-8.20 L-9.36 -1.15 M-2.58 -7.70 L0.50 0.00 L3.58 -7.70 M5.74 -3.85 H10.36 M12.51 -6.54 L13.67 -7.70 H15.98 L17.13 -6.54 V-4.77 L15.98 -3.85 H14.05 M15.98 -3.85 L17.13 -2.93 V-1.15 L15.98 0.00 H13.67 L12.51 -1.15 M19.29 0.00 L22.56 -7.70 L25.83 0.00 M20.44 -2.69 H24.68 " fill="none" stroke="#bdbdbd" stroke-width="0.95" stroke-linecap="square" stroke-linejoin="miter"/>
<path transform="translate(1378,359) rotate(0) translate(0,3.96)" d="M-29.07 -3.96 H-24.31 M-26.69 -6.34 V-1.58 M-22.10 -3.96 H-17.34 M-15.13 -6.73 L-13.94 -7.92 H-11.56 L-10.38 -6.73 V-4.91 L-11.56 -3.96 H-13.54 M-11.56 -3.96 L-10.38 -3.01 V-1.19 L-11.56 0.00 H-13.94 L-15.13 -1.19 M-7.76 0.00 V-0.71 M-5.15 -6.73 L-3.96 -7.92 H-1.58 L-0.40 -6.73 V-4.91 L-1.58 -3.96 H-3.56 M-1.58 -3.96 L-0.40 -3.01 V-1.19 L-1.58 0.00 H-3.96 L-5.15 -1.19 M1.82 -7.92 L4.99 0.00 L8.16 -7.92 M10.38 -3.96 H15.13 M17.50 -6.18 L19.72 -7.92 V0.00 M22.33 0.00 L25.70 -7.92 L29.07 0.00 M23.52 -2.77 H27.88 " fill="none" stroke="#c93a40" stroke-width="1.1" stroke-linecap="square" stroke-linejoin="miter"/>
<path transform="translate(1213,510) rotate(0) translate(0,3.96)" d="M-24.08 -3.96 H-19.32 M-21.70 -6.34 V-1.58 M-17.11 -3.96 H-12.36 M-5.39 -7.92 H-9.98 V-4.36 H-6.57 L-5.39 -3.17 V-1.19 L-6.57 0.00 H-8.95 L-10.14 -1.19 M-3.17 -7.92 L0.00 0.00 L3.17 -7.92 M5.39 -3.96 H10.14 M12.51 -6.18 L14.73 -7.92 V0.00 M17.34 0.00 L20.71 -7.92 L24.08 0.00 M18.53 -2.77 H22.89 " fill="none" stroke="#c93a40" stroke-width="1.1" stroke-linecap="square" stroke-linejoin="miter"/>
<path transform="translate(1299,510) rotate(0) translate(0,3.96)" d="M-30.65 0.00 V-7.92 H-26.29 L-24.95 -6.73 V-5.15 L-26.29 -3.96 H-30.65 M-27.48 -3.96 L-24.71 0.00 M-22.49 -3.96 H-17.74 M-15.52 -6.73 L-14.34 -7.92 H-11.96 L-10.77 -6.73 V-4.91 L-11.96 -3.96 H-13.94 M-11.96 -3.96 L-10.77 -3.01 V-1.19 L-11.96 0.00 H-14.34 L-15.52 -1.19 M-8.16 0.00 V-0.71 M-5.54 -6.73 L-4.36 -7.92 H-1.98 L-0.79 -6.73 V-4.91 L-1.98 -3.96 H-3.96 M-1.98 -3.96 L-0.79 -3.01 V-1.19 L-1.98 0.00 H-4.36 L-5.54 -1.19 M1.43 -7.92 L4.59 0.00 L7.76 -7.92 M9.98 -3.96 H14.73 M16.95 -6.73 L18.14 -7.92 H20.51 L21.70 -6.73 V-4.91 L20.51 -3.96 H18.53 M20.51 -3.96 L21.70 -3.01 V-1.19 L20.51 0.00 H18.14 L16.95 -1.19 M23.92 0.00 L27.28 -7.92 L30.65 0.00 M25.11 -2.77 H29.46 " fill="none" stroke="#c93a40" stroke-width="1.1" stroke-linecap="square" stroke-linejoin="miter"/>
<path transform="translate(1378,510) rotate(0) translate(0,3.96)" d="M-25.66 0.00 V-7.92 H-21.30 L-19.96 -6.73 V-5.15 L-21.30 -3.96 H-25.66 M-22.49 -3.96 L-19.72 0.00 M-17.50 -3.96 H-12.75 M-5.78 -7.92 H-10.38 V-4.36 H-6.97 L-5.78 -3.17 V-1.19 L-6.97 0.00 H-9.35 L-10.53 -1.19 M-3.56 -7.92 L-0.40 0.00 L2.77 -7.92 M4.99 -3.96 H9.74 M11.96 -6.73 L13.15 -7.92 H15.52 L16.71 -6.73 V-4.91 L15.52 -3.96 H13.54 M15.52 -3.96 L16.71 -3.01 V-1.19 L15.52 0.00 H13.15 L11.96 -1.19 M18.93 0.00 L22.29 -7.92 L25.66 0.00 M20.12 -2.77 H24.47 " fill="none" stroke="#c93a40" stroke-width="1.1" stroke-linecap="square" stroke-linejoin="miter"/>
<path transform="translate(857.6,614) rotate(-90) translate(0,4.50)" d="M-28.04 0.00 V-9.00 H-23.09 L-21.55 -7.65 V-5.85 L-23.09 -4.50 H-28.04 M-24.43 -4.50 L-21.29 0.00 M-18.77 -4.50 H-13.37 M-5.45 -9.00 H-10.67 V-4.95 H-6.80 L-5.45 -3.60 V-1.35 L-6.80 0.00 H-9.50 L-10.85 -1.35 M-2.93 -9.00 L0.67 0.00 L4.27 -9.00 M6.79 -4.50 H12.20 M14.89 -7.02 L17.41 -9.00 V0.00 M20.38 0.00 L24.21 -9.00 L28.03 0.00 M21.73 -3.15 H26.68 " fill="none" stroke="#c93a40" stroke-width="1.1" stroke-linecap="square" stroke-linejoin="miter"/>
<path transform="translate(1345,150) rotate(-90) translate(0,5.04)" d="M-47.38 -10.08 V0.00 H-40.32 M-37.50 0.00 V-10.08 L-32.96 -4.03 L-28.43 -10.08 V0.00 M-25.60 -8.57 L-24.09 -10.08 H-21.07 L-19.56 -8.57 V-6.05 L-25.60 0.00 H-19.56 M-10.68 -10.08 H-16.53 V-5.54 H-12.20 L-10.68 -4.03 V-1.51 L-12.20 0.00 H-15.22 L-16.73 -1.51 M-1.81 -5.04 H-6.35 L-7.86 -6.55 V-8.57 L-6.35 -10.08 H-3.33 L-1.81 -8.57 V-2.52 L-3.83 0.00 H-6.85 M6.05 -10.08 H3.02 L1.01 -7.56 V-1.51 L2.52 0.00 H5.54 L7.06 -1.51 V-4.54 L5.54 -5.85 H1.01 M16.93 -8.57 L15.42 -10.08 H11.39 L9.88 -8.57 V-6.25 L11.39 -5.04 H15.42 L16.93 -3.83 V-1.51 L15.42 0.00 H11.39 L9.88 -1.51 M19.76 -5.04 H25.80 M28.63 -8.57 L30.14 -10.08 H33.16 L34.68 -8.57 V-6.25 L33.16 -5.04 H30.64 M33.16 -5.04 L34.68 -3.83 V-1.51 L33.16 0.00 H30.14 L28.63 -1.51 M38.00 0.00 V-0.91 M41.33 -8.57 L42.84 -10.08 H45.86 L47.38 -8.57 V-6.25 L45.86 -5.04 H43.34 M45.86 -5.04 L47.38 -3.83 V-1.51 L45.86 0.00 H42.84 L41.33 -1.51 " fill="none" stroke="#c93a40" stroke-width="1.1" stroke-linecap="square" stroke-linejoin="miter"/>
<path transform="translate(1345,290) rotate(-90) translate(0,5.04)" d="M-47.38 -10.08 V0.00 H-40.32 M-37.50 0.00 V-10.08 L-32.96 -4.03 L-28.43 -10.08 V0.00 M-25.60 -8.57 L-24.09 -10.08 H-21.07 L-19.56 -8.57 V-6.05 L-25.60 0.00 H-19.56 M-10.68 -10.08 H-16.53 V-5.54 H-12.20 L-10.68 -4.03 V-1.51 L-12.20 0.00 H-15.22 L-16.73 -1.51 M-1.81 -5.04 H-6.35 L-7.86 -6.55 V-8.57 L-6.35 -10.08 H-3.33 L-1.81 -8.57 V-2.52 L-3.83 0.00 H-6.85 M6.05 -10.08 H3.02 L1.01 -7.56 V-1.51 L2.52 0.00 H5.54 L7.06 -1.51 V-4.54 L5.54 -5.85 H1.01 M16.93 -8.57 L15.42 -10.08 H11.39 L9.88 -8.57 V-6.25 L11.39 -5.04 H15.42 L16.93 -3.83 V-1.51 L15.42 0.00 H11.39 L9.88 -1.51 M19.76 -5.04 H25.80 M28.63 -8.57 L30.14 -10.08 H33.16 L34.68 -8.57 V-6.25 L33.16 -5.04 H30.64 M33.16 -5.04 L34.68 -3.83 V-1.51 L33.16 0.00 H30.14 L28.63 -1.51 M38.00 0.00 V-0.91 M41.33 -8.57 L42.84 -10.08 H45.86 L47.38 -8.57 V-6.25 L45.86 -5.04 H43.34 M45.86 -5.04 L47.38 -3.83 V-1.51 L45.86 0.00 H42.84 L41.33 -1.51 " fill="none" stroke="#c93a40" stroke-width="1.1" stroke-linecap="square" stroke-linejoin="miter"/>
<path transform="translate(1060,618) rotate(0) translate(0,3.60)" d="M-6.80 -7.20 V-1.08 L-7.88 0.00 H-10.04 L-11.12 -1.08 V-2.16 M-0.47 -7.20 H-4.64 V-3.96 H-1.55 L-0.47 -2.88 V-1.08 L-1.55 0.00 H-3.71 L-4.79 -1.08 M6.59 -6.12 L5.51 -7.20 H2.63 L1.55 -6.12 V-4.46 L2.63 -3.60 H5.51 L6.59 -2.74 V-1.08 L5.51 0.00 H2.63 L1.55 -1.08 M8.75 -5.62 L10.76 -7.20 V0.00 " fill="none" stroke="#c93a40" stroke-width="1.1" stroke-linecap="square" stroke-linejoin="miter"/>
<path transform="translate(857,748) rotate(0) translate(0,4.68)" d="M-7.63 0.00 V-9.36 H-2.48 L-0.89 -7.96 V-6.08 L-2.48 -4.68 H-7.63 M-3.88 -4.68 L-0.61 0.00 M2.01 -4.68 H7.63 M4.82 -7.49 V-1.87 " fill="none" stroke="#c93a40" stroke-width="1.1" stroke-linecap="square" stroke-linejoin="miter"/>
<path transform="translate(884,748) rotate(0) translate(0,4.68)" d="M-7.63 0.00 V-9.36 H-2.48 L-0.89 -7.96 V-6.08 L-2.48 -4.68 H-7.63 M-3.88 -4.68 L-0.61 0.00 M2.01 -4.68 H7.63 " fill="none" stroke="#c93a40" stroke-width="1.1" stroke-linecap="square" stroke-linejoin="miter"/>
<path transform="translate(1360,190) rotate(-90) translate(0,5.04)" d="M-2.42 -10.08 H-8.27 V-5.54 H-3.93 L-2.42 -4.03 V-1.51 L-3.93 0.00 H-6.96 L-8.47 -1.51 M0.40 -10.08 L4.44 0.00 L8.47 -10.08 " fill="none" stroke="#c93a40" stroke-width="1.1" stroke-linecap="square" stroke-linejoin="miter"/>
<path transform="translate(1059,111) rotate(0) translate(0,9.00)" d="M-13.77 -18.00 H-6.57 L-2.97 -14.40 V-3.60 L-6.57 0.00 H-13.77 L-17.37 -3.60 V-14.40 ZM2.07 0.00 V-18.00 L17.37 0.00 V-18.00 " fill="none" stroke="#c93a40" stroke-width="1.8" stroke-linecap="square" stroke-linejoin="miter"/>
<path transform="translate(1066,175) rotate(0) translate(0,9.00)" d="M-21.24 -18.00 H-14.04 L-10.44 -14.40 V-3.60 L-14.04 0.00 H-21.24 L-24.84 -3.60 V-14.40 ZM7.20 -18.00 H-5.40 V0.00 M-5.40 -9.00 H3.60 M24.84 -18.00 H12.24 V0.00 M12.24 -9.00 H21.24 " fill="none" stroke="#c93a40" stroke-width="1.8" stroke-linecap="square" stroke-linejoin="miter"/>
<!--/TEXT-->
</svg>

<!-- coordinate bar -->
<div class="t" style="left:433px;top:13px;font-size:13px;color:#333">0.5 mm (28.4 72.8)</div>
<div class="a" style="left:576px;top:8px;width:1070px;height:26px;background:#fff;border:1px solid #1f95d0"></div>
<div class="a" style="left:583px;top:13px;width:1px;height:16px;background:#222"></div>
<!-- h scrollbar -->
<div class="a" style="left:426px;top:863px;width:1208px;height:17px;background:#f4f4f4"></div>
<div class="a" style="left:916px;top:869px;width:718px;height:6px;background:#808080;border-radius:3px"></div>
<div class="a" style="left:0;top:880px;width:1634px;height:1px;background:#8c8c8c"></div>
<!-- status -->
<div class="a" style="left:0;top:881px;width:1634px;height:24px;background:#ededed"></div>
<div class="t" style="left:2px;top:885px;font-size:12.5px;letter-spacing:0.09px;color:#333">Ratsnest: Nothing to do! Left-click &amp; drag to define group (or left-click to start defining a group polygon)</div>
<div class="a" style="left:0;top:905px;width:1634px;height:1px;background:#0a0f18"></div>
<div class="a" style="left:48px;top:905px;width:344px;height:1px;background:#c4c4c4"></div>
</body></html>
